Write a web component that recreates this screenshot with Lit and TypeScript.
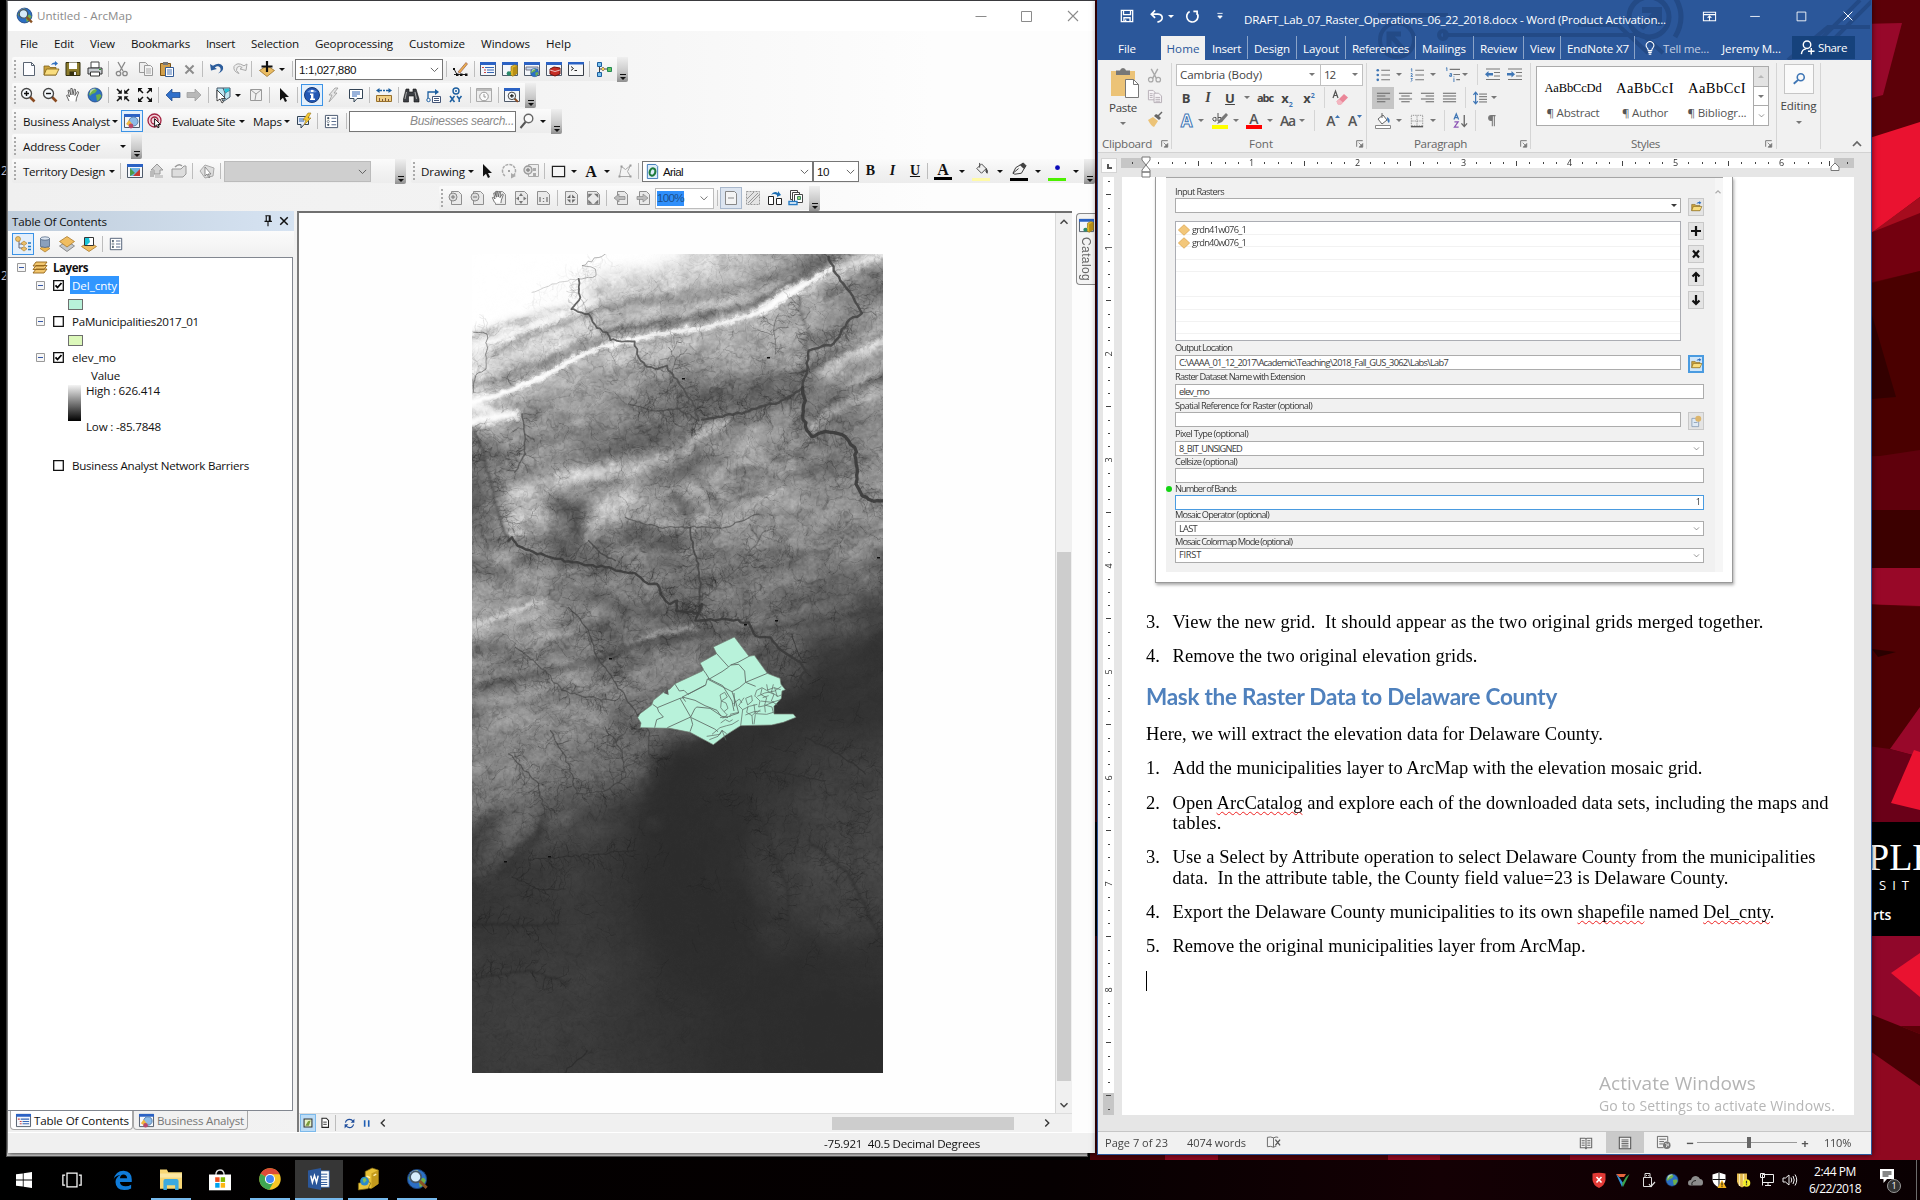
import { LitElement, html, css, svg, SVGTemplateResult } from "lit";
import { customElement, property } from "lit/decorators.js";
import { styleMap } from "lit/directives/style-map.js";

/* ------------------------------------------------------------------ icons */

const doc = svg`<path d="M2.500 1.500h8l3 3v10h-11z" fill="#fdfdff" stroke="#5a6472"/><path d="M10.500 1.500v3h3" fill="none" stroke="#5a6472"/>`;
const win = svg`<path d="M.5 1.500h15v13H.5z" fill="#f4f7fb" stroke="#4f5a69"/><path d="M0 1h16v3H0z" fill="#2b62c4"/>`;
const lens = svg`<path d="M10 10l4.500 4.500" stroke="#8a4a20" stroke-width="2.600"/><circle cx="6.500" cy="6.500" r="5" fill="#f4f8fc" stroke="#444" stroke-width="1.300"/>`;
const hand = svg`<path d="M4 14L1.500 8.500l1.200-.6L4.500 10 3 3.500l1.300-.4L6 8 5.800 1.500h1.400L8 7.800l1.200-5.600 1.300.3L10 8.500l2.500-4 1.200.7-2.200 6L11 14.500" fill="#fff" stroke="#555" stroke-width=".9"/>`;
const ptr = svg`<path d="M4 1v12.500l3-2.800 2 4.300 2-1-2-4h4z" fill="#111"/>`;
const globe = svg`<circle cx="8" cy="8" r="7" fill="#2c6fc4" stroke="#1a3f75" stroke-width=".7"/><path d="M4 3l4-1.500 2 2-2 2.500-3 1L3 9 1.800 7zM9 8l4-1 1.500 2-2.500 4-2 1z" fill="#6fb04a"/><path d="M3 3.500q3-3 6-1.500-4 1-6 5z" fill="#fff" opacity=".5"/>`;
const cyl = svg`<path d="M8 4l4-2 3 1v9l-5 3-5-3 3-3z" fill="#e3b92a" stroke="#7d6410" stroke-width=".7"/><path d="M10 5v10l5-3V3z" fill="#b98f16"/><circle cx="5.500" cy="12" r="2.500" fill="#2c8a6c"/>`;
const pageDim = svg`<path d="M4.500 1.500h7l3 3v10h-10z" fill="#e9e9e9" stroke="#8f8f8f"/>`;

const icons: Record<string, SVGTemplateResult> = {
  doc,
  open: svg`<path d="M1 5h5l1 1.500h6V14H1z" fill="#caa23c" stroke="#7d5f17" stroke-width=".8"/><path d="M3.500 8H16l-3 6H1z" fill="#f9dd7e" stroke="#7d5f17" stroke-width=".8"/><path d="M8 4q1-3 4-2.500V0l3 2.500L12 5V3.500Q10 3 8 4z" fill="#2f6fc0"/>`,
  save: svg`<path d="M1 1.500h14v13H1z" fill="#8b7b2c" stroke="#35300f"/><path d="M4 1.500h8V8H4z" fill="#fff"/><path d="M4.500 10.500h7v4h-7z" fill="#35300f"/><path d="M9 11h2v3H9z" fill="#eee"/>`,
  print: svg`<path d="M4 1h8v6H4z" fill="#fff" stroke="#444"/><path d="M1 7h14v6H1z" fill="#c9cdd2" stroke="#333"/><path d="M3.500 11h9v4h-9z" fill="#fff" stroke="#333"/><path d="M12 8.500h2" stroke="#2a2"/>`,
  cut: svg`<path d="M4 1l5 9M11 1L6 10" stroke="#888" stroke-width="1.300"/><circle cx="4.500" cy="12.500" r="2.200" fill="none" stroke="#888" stroke-width="1.300"/><circle cx="11" cy="12.500" r="2.200" fill="none" stroke="#888" stroke-width="1.300"/>`,
  copy: svg`<path d="M1.500 1.500h6l2 2v8h-8z" fill="#eee" stroke="#999"/><path d="M6.500 4.500h6l2 2v8h-8z" fill="#f4f4f4" stroke="#999"/><path d="M8 8h5M8 10h5M8 12h5" stroke="#aaa"/>`,
  paste: svg`<path d="M1.500 2.500h10v12h-10z" fill="#d3a04b" stroke="#7a5316"/><path d="M4 1h5v3H4z" fill="#777"/><path d="M6.500 6.500h8v9h-8z" fill="#fff" stroke="#335b96"/><path d="M8 9h5M8 11h5M8 13h5" stroke="#4a77b8"/>`,
  prj: svg`<path d="M2.500 4.500h9v11h-9z" fill="#dfeaf5" stroke="#7f94ad"/><circle cx="11" cy="5" r="4" fill="#dcb56c"/><path d="M5 10h5" stroke="#7f94ad"/>`,
  x: svg`<path d="M3 3l10 10M13 3L3 13" stroke="#8c8c8c" stroke-width="2.400"/>`,
  undo: svg`<path d="M1 3l1 6.500L8 8 5.800 6.500Q9 4 11 6.500q2 3-2 6 6-2 5-7Q11 .5 4 4.800z" fill="#2c5d9c"/>`,
  redo: svg`<path d="M15 3l-1 6.500L8 8l2.200-1.500Q7 4 5 6.500q-2 3 2 6-6-2-5-7Q5 .5 12 4.800z" fill="#eee" stroke="#aaa"/>`,
  add: svg`<path d="M8 4.500l7.500 5L8 15.500.5 9.500z" fill="#e9bb62" stroke="#90661c" stroke-width=".7"/><path d="M8 0v11M2.500 5.500h11" stroke="#111" stroke-width="2.200"/>`,
  edit: svg`<path d="M2 13.500h12M2 8l3 5.500" stroke="#222"/><path d="M1 7h2v2H1zM4 12.500h2.500V15H4zM13 12.500h2.500V15H13zM8 12.500h2.500V15H8z" fill="#111"/><path d="M6 11L14 1.500l1.500 1.500L8 12z" fill="#eab04c" stroke="#844" stroke-width=".6"/>`,
  toc: svg`${win}<path d="M5 6.500h9M7 9h7M7 11.500h7" stroke="#3566b5" stroke-width="1.200"/><path d="M2 6.500h2M4 9h2M4 11.500h2" stroke="#c44" stroke-width="1.200"/>`,
  cat: svg`${win}<g transform="translate(2 2) scale(.88)">${cyl}</g>`,
  search: svg`${win}<path d="M2 6h12v3H2z" fill="#c9daf0" stroke="#778"/><g transform="translate(6 7) scale(.58)">${globe}</g>`,
  tool: svg`${win}<path d="M4 8l4-2 6 1v6l-5 2-5-2z" fill="#c62d25" stroke="#6d120d"/><path d="M4 9l5 1.500L14 9" fill="none" stroke="#fff" stroke-width=".7"/>`,
  py: svg`<path d="M.5 1.500h15v13H.5z" fill="#f7f7f7" stroke="#3a3f48"/><path d="M0 1h16v2.500H0z" fill="#2b62c4"/><path d="M3 5.500l2.500 2L3 9.500M6.500 9.500H9" fill="none" stroke="#222"/>`,
  model: svg`<path d="M3.500 4v9M4 8h8" stroke="#444"/><path d="M1.500 1.500h4v4h-4zM1.500 11.500h4v4h-4z" fill="#7cc3ee" stroke="#1d5fa0"/><path d="M7 6l2 2-2 2-2-2z" fill="#f4d04a" stroke="#987"/><path d="M11.500 6.500h4v4h-4z" fill="#6ac45c" stroke="#285"/>`,
  zin: svg`${lens}<path d="M6.500 4v5M4 6.500h5" stroke="#111" stroke-width="1.400"/>`,
  zout: svg`${lens}<path d="M4 6.500h5" stroke="#111" stroke-width="1.400"/>`,
  hand,
  globe,
  fixin: svg`<path d="M2 2l3 3M14 2l-3 3M2 14l3-3M14 14l-3-3" stroke="#111" stroke-width="1.600"/><path d="M6.800 2.500v4.300H2.500zM9.200 2.500v4.300h4.300zM6.800 13.500V9.200H2.500zM9.200 13.500V9.200h4.300z" fill="#111"/>`,
  fixout: svg`<path d="M3 3l3 3M13 3l-3 3M3 13l3-3M13 13l-3-3" stroke="#111" stroke-width="1.500"/><path d="M1 1h4.500L1 5.500zM15 1h-4.500L15 5.500zM1 15h4.500L1 10.500zM15 15h-4.500L15 10.500z" fill="#111"/>`,
  back: svg`<path d="M1 8l6-6v3.500h8v5H7V14z" fill="#2f6fca" stroke="#1b4688" stroke-width=".7"/>`,
  fwd: svg`<path d="M15 8L9 2v3.500H1v5h8V14z" fill="#b8b8b8" stroke="#999" stroke-width=".7"/>`,
  sel: svg`<path d="M2 1h13v9L9 14l-7-3z" fill="#bfe6f2" stroke="#456"/><path d="M8 1l2 5 5-3M10 6l-1 7" stroke="#456" fill="none"/><path d="M9 2l5-.5.5 2-4 2.500z" fill="#24c3d8"/><path d="M2 3v11l3-2 2 4 1.500-1-2-3.500h4z" fill="#fff" stroke="#222" stroke-width=".8"/>`,
  clr: svg`<path d="M2.500 2.500h11v11h-11z" fill="#f0f0f0" stroke="#999"/><path d="M3 3l5 4 5-4M8 7l-1 6" stroke="#999" fill="none"/>`,
  ptr,
  info: svg`<circle cx="8" cy="8" r="7.500" fill="#2458b4" stroke="#173a78"/><path d="M3 5q5-5 10 0-5 1-10 0z" fill="#8fb4ec" opacity=".7"/><path d="M7 3h2.500v2H7zM6 6.500h3.400v5H11V13H6v-1.500h1V8H6z" fill="#fff"/>`,
  bolt: svg`<path d="M10 1L4 8h3l-3 7 8-9H9l4-5z" fill="#e6e6e6" stroke="#999" stroke-width=".8"/>`,
  popup: svg`<path d="M1.500 2.500h13v9H9L6 15v-3.500H1.500z" fill="#fff" stroke="#345"/><path d="M4 5h8M4 7h8M4 9h5" stroke="#3566b5"/>`,
  meas: svg`<path d="M0 3.500L3.500 1v5zM16 3.500L12.500 1v5z" fill="#1d5fa0"/><path d="M3 3.500h3M7 3.500h2M10 3.500h3" stroke="#1d5fa0" stroke-width="1.500"/><path d="M.5 8.500h15v6H.5z" fill="#f1cf85" stroke="#98702a"/><path d="M3.500 14v-3M6.500 14v-2M9.500 14v-3M12.500 14v-2" stroke="#754"/>`,
  bino: svg`<path d="M3 2h3v3h4V2h3l3 10v3h-5V9H5.500v6h-5v-3z" fill="#3c3f44" stroke="#111" stroke-width=".6"/><path d="M3.500 5L2 12M12 5l1.500 7" stroke="#aaa"/>`,
  route: svg`<path d="M2 13V5h8" fill="none" stroke="#1d5fa0" stroke-width="1.300"/><path d="M9 2l4 3-4 3z" fill="#1d5fa0"/><circle cx="2.500" cy="13" r="1.700" fill="#fff" stroke="#1d5fa0"/><path d="M6.500 9.500h8v6h-8z" fill="#fff" stroke="#457"/><path d="M8 11.500h5M8 13.500h5" stroke="#457"/>`,
  xy: svg`<circle cx="8" cy="4" r="3" fill="none" stroke="#1d5fa0" stroke-width="1.400"/><circle cx="8" cy="4" r="1" fill="#1d5fa0"/><path d="M2 9l4.500 6M6.500 9L2 15M9 9l2.200 3L13.500 9M11.200 12v3" stroke="#1d5fa0" stroke-width="1.500" fill="none"/>`,
  clock: svg`<path d="M.5 1.500h15v13H.5z" fill="#eee" stroke="#aaa"/><path d="M1 2h14v2H1z" fill="#bbb"/><circle cx="8" cy="9.500" r="4.300" fill="#fafafa" stroke="#999"/><path d="M8 7v3h2" fill="none" stroke="#999"/>`,
  view: svg`${win}<g transform="translate(3 4) scale(.75)">${lens}<path d="M6.500 4v5M4 6.500h5" stroke="#111" stroke-width="1.400"/></g>`,
  ba: svg`${win}<circle cx="9.500" cy="8.500" r="4.500" fill="#8dbce8" stroke="#5a80ac"/><path d="M5 7l-3 4 3 2 4-1z" fill="#f0b840"/><circle cx="7" cy="13" r="2.400" fill="#b84a6c"/>`,
  ring: svg`<circle cx="7.500" cy="7.500" r="6.500" fill="#f3d5dc" stroke="#a32442" stroke-width="1.300"/><circle cx="7.500" cy="7.500" r="3.500" fill="none" stroke="#a32442" stroke-width="1.300"/><g transform="translate(5 5) scale(.65)"><path d="M4 1v12.500l3-2.800 2 4.300 2-1-2-4h4z" fill="#fff" stroke="#111" stroke-width="1.500"/></g>`,
  bolt2: svg`<path d="M1.500 3.500h11v8H8L5 15v-3.500H1.500z" fill="#e4ecf8" stroke="#345"/><path d="M3 6h5M3 8h5" stroke="#3566b5"/><path d="M12 0L7 7h3l-2 5 7-7h-3l3-5z" fill="#f4c832" stroke="#97761c" stroke-width=".6"/>`,
  opts: svg`<path d="M1.500 1.500h13v13h-13z" fill="#fff" stroke="#44546c"/><circle cx="4.500" cy="4.500" r="1.200" fill="#456"/><circle cx="4.500" cy="8" r="1.200" fill="#fff" stroke="#456" stroke-width=".6"/><circle cx="4.500" cy="11.500" r="1.200" fill="#456"/><path d="M8 4.500h5M8 8h5M8 11.500h5" stroke="#5c6f90" stroke-width="1.200"/>`,
  mag: svg`<circle cx="9.500" cy="5.500" r="4.300" fill="#fafafa" stroke="#666" stroke-width="1.400"/><path d="M6.500 9L1.500 15" stroke="#555" stroke-width="2"/>`,
  terr: svg`${win}<path d="M3 5h10v8H3z" fill="#6eb3e4"/><path d="M3 5l5 5-5 3z" fill="#4c9b46"/><path d="M13 6L6 13h7z" fill="#c43a32"/>`,
  tarr: svg`<path d="M8 1l6 6h-3v4H5V7H2z" fill="#d5d5d5" stroke="#999"/><path d="M1 8l4-1v7H1z" fill="#bbb"/><path d="M6 12h8v3H6z" fill="#ccc"/>`,
  tbox: svg`<path d="M1 6h9l3-3h2v8l-3 3H1z" fill="#ddd" stroke="#999"/><path d="M4 4q4-4 7-1" stroke="#999" fill="none" stroke-width="1.500"/>`,
  tsel: svg`<path d="M1 8l5-6 9 3-1 8-8 2z" fill="#ddd" stroke="#aaa"/><path d="M6 4v9l2-2 2 4 1-1-2-3h3z" fill="#fff" stroke="#777" stroke-width=".8"/>`,
  rot: svg`<path d="M4 13A6.500 6.500 0 1 1 12 13" fill="none" stroke="#aaa" stroke-width="1.500" stroke-dasharray="3 1"/><path d="M10 10l5 3-5 2.500z" fill="#aaa"/><circle cx="8" cy="8" r="1" fill="#888"/>`,
  zsel: svg`<path d="M5.500 1.500h10v12h-10z" fill="#eee" stroke="#aaa"/><circle cx="5" cy="7" r="4" fill="#ddd" stroke="#999" stroke-width="1.300"/><path d="M5 5v4M3 7h4" stroke="#888" stroke-width="1.300"/><path d="M10 5h3v3h-3zM10 10h3v3h-3z" fill="#aaa"/>`,
  rect: svg`<path d="M1.500 2.500h13v11h-13z" fill="#f5f5f5" stroke="#222" stroke-width="1.300"/>`,
  poly: svg`<path d="M2.500 13.500l2-10 4 3 5-4-3 6 3 5z" fill="#f4f4f4" stroke="#aaa"/><path d="M1.500 12.500h2v2h-2zM3.500 2.500h2v2h-2zM12.500 1.500h2v2h-2zM12.500 12.500h2v2h-2z" fill="#999"/>`,
  font: svg`<path d="M2.500.5h9l2 2v13h-11z" fill="#dcecf8" stroke="#3b78b8"/><ellipse cx="8" cy="8.500" rx="3" ry="4" fill="none" stroke="#1d7a3c" stroke-width="2.200" transform="rotate(18 8 8.500)"/>`,
  bucket: svg`<path d="M3 7l5-5 5 5-5 5z" fill="#eee" stroke="#444"/><path d="M6 1v5M13 7q2 2 1 5-2-1-1-5z" fill="#555" stroke="#444"/>`,
  pen: svg`<path d="M1 12l3-6 5-3 4 4-3 5-7 1z" fill="#f2f2f2" stroke="#333"/><path d="M1 12l6-5M9 3l3-2 3 3-2 3z" fill="#444" stroke="#333"/>`,
  dot: svg`<circle cx="8" cy="6" r="2.600" fill="#0a0ab8"/>`,
  pzin: svg`${pageDim}<circle cx="6" cy="7" r="4" fill="#ddd" stroke="#888"/><path d="M6 5v4M4 7h4" stroke="#777"/>`,
  pzout: svg`${pageDim}<circle cx="6" cy="7" r="4" fill="#ddd" stroke="#888"/><path d="M4 7h4" stroke="#777"/>`,
  phand: svg`${pageDim}<g transform="scale(.9)">${hand}</g>`,
  pall: svg`<path d="M2.500 1.500h9l3 3v10h-12z" fill="#e9e9e9" stroke="#8f8f8f"/><path d="M8 3l2 3H6zM8 14l2-3H6zM3 8.500l3-2v4zM13.500 8.500l-3-2v4z" fill="#777"/>`,
  pone: svg`<path d="M2.500 1.500h9l3 3v10h-12z" fill="#e9e9e9" stroke="#8f8f8f"/><path d="M5 7v5M12 7v5M8.500 8v1M8.500 11v1" stroke="#777" stroke-width="1.300"/>`,
  pin: svg`<path d="M2.500 1.500h9l3 3v10h-12z" fill="#e9e9e9" stroke="#8f8f8f"/><g transform="translate(2.500 3) scale(.72)"><path d="M6.800 2v4.800H2zM9.200 2v4.800H14zM6.800 14V9.200H2zM9.200 14V9.200H14z" fill="#666"/></g>`,
  pout: svg`<path d="M2.500 1.500h9l3 3v10h-12z" fill="#e9e9e9" stroke="#8f8f8f"/><g transform="translate(2.500 3) scale(.72)"><path d="M1 1h6L1 7zM15 1H9l6 6zM1 15h6L1 9zM15 15H9l6-6z" fill="#777"/></g>`,
  pback: svg`${pageDim}<path d="M1 8l5-4v2.500h6v3H6V12z" fill="#bbb" stroke="#888" stroke-width=".7"/>`,
  pfwd: svg`${pageDim}<path d="M13 8L8 4v2.500H2v3h6V12z" fill="#bbb" stroke="#888" stroke-width=".7"/>`,
  draft: svg`<path d="M2.500 1.500h9l2 2v11h-11z" fill="#f4f4f4" stroke="#888"/><path d="M5 8h6" stroke="#888"/>`,
  focus: svg`<path d="M1.500 1.500h13v13h-13z" fill="#e4e4e4" stroke="#999" stroke-dasharray="2 1"/><path d="M3 13L13 3M5 14l9-9M2 9l7-7" stroke="#999"/>`,
  chg: svg`<path d="M1.500 6.500h5v8h-5zM9.500 8.500h5v6h-5z" fill="#fff" stroke="#222"/><path d="M4 5q3-5 7-2V1l3 4-4 2V5Q7 3 4 5z" fill="#1d6fb4"/>`,
  ddp: svg`<path d="M2.500.5h7v9h-7z" fill="#fff" stroke="#444"/><path d="M4.500 2.500h7v9h-7z" fill="#fff" stroke="#444"/><path d="M6.500 4.500h8v8h-8z" fill="#fff" stroke="#444"/><path d="M9.500 6.500h3v3h-3z" fill="#9d7" stroke="#486"/><path d="M1 11.500h8v3H1z" fill="#fff" stroke="#267bc4" stroke-width="1.400"/>`,
  tree: svg`<path d="M4 4v8h5M4 8h5" fill="none" stroke="#667"/><circle cx="3" cy="3" r="2.500" fill="#ecc06a" stroke="#a87722" stroke-width=".6"/><path d="M9 5l3 2.300-3 2.300-3-2.300zM9 10.500l3 2.300-3 2.300-3-2.300z" fill="#ecc06a" stroke="#a87722" stroke-width=".6"/><path d="M13 7h3M13 10.500h3M13 13.500h3" stroke="#267bc4" stroke-width="1.300"/>`,
  src: svg`<path d="M8 9l5 3.500L8 16l-5-3.500z" fill="#ecb650" stroke="#9c6c1c" stroke-width=".6"/><path d="M3.500 2.500v8q4.500 2 9 0v-8z" fill="#8aa0bc" stroke="#435a78" stroke-width=".7"/><ellipse cx="8" cy="2.500" rx="4.500" ry="1.700" fill="#dbe5f1" stroke="#435a78" stroke-width=".7"/>`,
  vis: svg`<path d="M8 5l7.500 5L8 15.500.5 10z" fill="#c4c8cc" stroke="#666" stroke-width=".7"/><path d="M8 .5l7.500 5L8 11 .5 5.500z" fill="#f0bd60" stroke="#a06e1c" stroke-width=".7"/>`,
  dia: svg`<path d="M8 1l7.500 7L8 15 .5 8z" fill="#f3c77a" stroke="#dba349"/>`,
  sell: svg`<path d="M8 6l7.500 4.500L8 15.500.5 10.500z" fill="#f0bd60" stroke="#a06e1c" stroke-width=".7"/><path d="M3.500 1.500h9v8h-9z" fill="#fff" stroke="#333"/><path d="M4 2h4l1 4-3 3H4z" fill="#18c4d8"/>`,
  layers: svg`<path d="M4 10h11l-3 4H1zM4 6.500h11l-3 4H1zM4 3h11l-3 4H1z" fill="#f2c66e" stroke="#936418" stroke-width=".9"/>`,
  arc: svg`${globe}<circle cx="7" cy="6.500" r="4" fill="#d7ecfa" stroke="#456" stroke-width="1.200"/><path d="M10 9.500l5 5" stroke="#8a5326" stroke-width="2.200"/>`,
  pinp: svg`<path d="M5 2h6M6 2v6M10.500 2v6M9.500 2v6M4 8.500h8.500M8 9v5" stroke="#111" stroke-width="1.300" fill="none"/>`,
  cls: svg`<path d="M3 3l10 10M13 3L3 13" stroke="#111" stroke-width="2"/>`,
  mapv: svg`<path d="M3.500 3.500h9v9h-9z" fill="#e7f3c8" stroke="#333" stroke-width="1.200"/><path d="M5 11l3-5 3-1-2 6z" fill="#7a9a3c"/>`,
  layv: svg`<path d="M4.500 2.500h5l2.500 2.500v8H4.500z" fill="#fff" stroke="#222" stroke-width="1.200"/><path d="M6 7h4M6 9.500h4" stroke="#222"/>`,
  refresh: svg`<path d="M3 7q1-4 5-4 3 0 4.500 2.500M13 9q-1 4-5 4-3 0-4.500-2.500" fill="none" stroke="#1f4e9c" stroke-width="1.400"/><path d="M14 2v5H9.500zM2 14V9h4.500z" fill="#1f4e9c"/>`,
  pause: svg`<path d="M4.500 4v8M9.500 4v8" stroke="#1f5fb4" stroke-width="2"/>`,
  lt: svg`<path d="M10 4L6 8l4 4" fill="none" stroke="#333" stroke-width="1.600"/>`,
  rt: svg`<path d="M6 4l4 4-4 4" fill="none" stroke="#333" stroke-width="1.600"/>`,
  up: svg`<path d="M4 10l4-4 4 4" fill="none" stroke="currentColor" stroke-width="1.700"/>`,
  dn: svg`<path d="M4 6l4 4 4-4" fill="none" stroke="currentColor" stroke-width="1.700"/>`,
  chev: svg`<path d="M3.500 6L8 10.500 12.500 6" fill="none" stroke="#555" stroke-width="1.100"/>`,
  wmin: svg`<path d="M2.500 8.500h11" stroke="currentColor"/>`,
  wmax: svg`<path d="M3.500 3.500h10v10h-10z" fill="none" stroke="currentColor"/>`,
  wcls: svg`<path d="M3 3l10 10M13 3L3 13" stroke="currentColor" stroke-width="1.100"/>`,
  /* word */
  wsave: svg`<path d="M1.500 1.500h13v13h-13zM4 1.500v5h8v-5M4.500 14.500V10h7v4.500M6.500 12v2.500" fill="none" stroke="#fff" stroke-width="1.500"/>`,
  wundo: svg`<path d="M2.500 5.500h7q5 .5 4.500 4.500-.5 3-5 4M6.500 1.500l-4 4 4 4" fill="none" stroke="#fff" stroke-width="1.800"/>`,
  wredo: svg`<path d="M10 2.500h4v4M13.500 4A6 6 0 1 1 6 2.600" fill="none" stroke="#fff" stroke-width="1.800"/>`,
  wcust: svg`<path d="M5 5h6M5.500 8h5L8 10.800z" fill="#fff" stroke="#fff" stroke-width="1"/>`,
  wdisp: svg`<path d="M1.500 3.500h13v9h-13zM1.500 6h13M8 12V7.500M6 9.500l2-2 2 2" fill="none" stroke="#fff" stroke-width="1.100"/>`,
  bulb: svg`<path d="M6 11q0-2-1.500-3.500a4.300 4.300 0 1 1 7 0Q10 9 10 11zM6 13h4M6.500 15h3" fill="none" stroke="#fff" stroke-width="1.200"/>`,
  share: svg`<circle cx="7.500" cy="5" r="4" fill="none" stroke="#fff" stroke-width="1.500"/><path d="M1.500 15q.5-5 5-5.500M12 8.500v7M8.500 12h7" fill="none" stroke="#fff" stroke-width="1.500"/>`,
  wcut: svg`<path d="M4.500 1l5.500 10M11.500 1L6 11" stroke="#a9a9a9" stroke-width="1.500"/><circle cx="4" cy="12.500" r="2.400" fill="none" stroke="#a9a9a9" stroke-width="1.300"/><circle cx="12" cy="12.500" r="2.400" fill="none" stroke="#a9a9a9" stroke-width="1.300"/>`,
  wcopy: svg`<path d="M1.500 1.500h5l2 2v8h-7z" fill="#f6f3f6" stroke="#b5aeb5"/><path d="M7.500 4.500h5l3 3v7h-8z" fill="#f6f3f6" stroke="#b5aeb5"/><path d="M3 5h3M3 7h3M3 9h3M9 9h5M9 11h5M9 13h5" stroke="#b5aeb5"/>`,
  brush: svg`<path d="M1 9l5-3 5 4-4 6q-3-1-6-7z" fill="#ecc377"/><path d="M7 5l5 4 2-2-2-2 3.500-3.500-1-1L11 4 9 3z" fill="#666"/>`,
  erase: svg`<path d="M1 8L3.500 1 6 8M2 5.500h3" fill="none" stroke="#555" stroke-width="1.200"/><path d="M4.500 11.500L12 4l4 3.500-7 7H6z" fill="#ea8698"/><path d="M4.500 11.500L7 9l4 3.500-2 2H6z" fill="#f3b5c0"/>`,
  wmag: svg`<circle cx="10" cy="6" r="4" fill="none" stroke="#3f76b5" stroke-width="1.800"/><path d="M7 9l-5 4.500" stroke="#3f76b5" stroke-width="2.200"/>`,
  bul: svg`<path d="M6 2.500h10M6 8h10M6 13.500h10" stroke="#777" stroke-width="1.200"/><circle cx="2" cy="2.500" r="1.500" fill="#3f76b5"/><circle cx="2" cy="8" r="1.500" fill="#3f76b5"/><circle cx="2" cy="13.500" r="1.500" fill="#3f76b5"/>`,
  num: svg`<path d="M6 2.500h10M6 8h10M6 13.500h10" stroke="#777" stroke-width="1.200"/><path d="M1 1.500l1-.8v3.600M.8 6.500q2-.8 2 .5L1 9.500h2.400M.8 12h2l-1 1.200q2 .8-1 2.300" fill="none" stroke="#3f76b5"/>`,
  multi: svg`<path d="M5 2.500h11M9 8h7M12 13.500h4" stroke="#777" stroke-width="1.200"/><path d="M1 1.500l1-.8v3.600M5 7h2v3H5V8.500h2M9.500 12v4M9.500 10v1" fill="none" stroke="#3f76b5"/>`,
  outd: svg`<path d="M1 2h14M9 5.500h6M9 9h6M1 12.500h14" stroke="#777" stroke-width="1.200"/><path d="M0 7.300L3.500 4v2H8v2.500H3.500v2z" fill="#3f76b5"/>`,
  ind: svg`<path d="M1 2h14M9 5.500h6M9 9h6M1 12.500h14" stroke="#777" stroke-width="1.200"/><path d="M8 7.300L4.500 4v2H0v2.500h4.500v2z" fill="#3f76b5"/>`,
  al: svg`<path d="M1 3.500h14M1 6.500h9M1 9.500h14M1 12.500h9" stroke="#666" stroke-width="1.100"/>`,
  ac: svg`<path d="M1 3.500h14M3.500 6.500h9M1 9.500h14M3.500 12.500h9" stroke="#666" stroke-width="1.100"/>`,
  ar: svg`<path d="M1 3.500h14M6 6.500h9M1 9.500h14M6 12.500h9" stroke="#666" stroke-width="1.100"/>`,
  aj: svg`<path d="M1 3.500h14M1 6.500h14M1 9.500h14M1 12.500h14" stroke="#666" stroke-width="1.100"/>`,
  spc: svg`<path d="M7 3.500h9M7 6.500h9M7 9.500h9M7 12.500h9" stroke="#666" stroke-width="1.100"/><path d="M3 2v12M.5 4.500L3 1.500l2.500 3M.5 11.500l2.500 3 2.500-3" fill="none" stroke="#3f76b5" stroke-width="1.400"/>`,
  shade: svg`<path d="M3 6l5-4 4 5-5 4z" fill="#fff" stroke="#666"/><path d="M7 0v5" stroke="#666"/><path d="M12 4q4 2 2 6-2-1-2-6z" fill="#3f76b5"/><path d="M.5 12.500h15v3H.5z" fill="#fff" stroke="#888"/>`,
  bord: svg`<path d="M1.500 1.500h13v12h-13zM8 2v12M2 8h12" fill="none" stroke="#777" stroke-dasharray="1 1"/><path d="M1 14.500h14" stroke="#555" stroke-width="1.500"/>`,
  az: svg`<path d="M1 7l2.500-6L6 7M2 5h3" fill="none" stroke="#3f76b5" stroke-width="1.300"/><path d="M1.500 9.500h4l-4 5.500h4.500" fill="none" stroke="#8c55b5" stroke-width="1.300"/><path d="M12 2v12M9 11l3 3.500 3-3.500" fill="none" stroke="#666" stroke-width="1.400"/>`,
  para: svg`<path d="M13 2H7.500a3 3 0 0 0 0 6H9V2M9 2v13M11.500 2v13" fill="none" stroke="#777" stroke-width="1.300"/><path d="M9 2H7.500a3 3 0 0 0 0 6H9z" fill="#777"/>`,
  launch: svg`<path d="M4.500 12V4.500H12" fill="none" stroke="#777" stroke-width="1.200"/><path d="M7 7l4 4M12 8v4.500H7.500z" stroke="#777" fill="#777"/>`,
  proof: svg`<path d="M8 3Q5 1.500 1.500 2.500v10Q5 11.500 8 13zM8 3q3-1.500 5-.5M8 13q2-1 3-1" fill="none" stroke="#666"/><path d="M10 5l5 6M15 5l-5 6" stroke="#555" stroke-width="1.400"/>`,
  read: svg`<path d="M1.500 2.500h5.500l1 1 1-1h5.500v11H9l-1 1-1-1H1.500zM8 3.500v11" fill="none" stroke="#666" stroke-width="1.200"/><path d="M3 5.500h3.500M3 8h3.500M3 10.500h3.500M9.500 5.500H13M9.500 8H13M9.500 10.500H13" stroke="#666" stroke-width="1.200"/>`,
  lay: svg`<path d="M1.500 1.500h13v13h-13z" fill="#eee" stroke="#555" stroke-width="1.200"/><path d="M4 4.500h8M4 6.500h8M4 8.500h8M4 10.500h8M4 12.500h8" stroke="#555"/>`,
  web: svg`<path d="M12.500 7V1.500h-11v12H8" fill="none" stroke="#666"/><path d="M3.500 4.500h7M3.500 7h5M3.500 9.500h4" stroke="#666"/><circle cx="11.500" cy="11" r="4" fill="#777"/><path d="M10 9l2 1-1 3M13 9v3" stroke="#eee" fill="none"/>`,
  /* taskbar */
  start: svg`<path d="M0 2.300L6.800 1.400v6.200H0zM7.600 1.200L16 0v7.600H7.600zM0 8.400h6.800v6.200L0 13.700zM7.600 8.400H16V16l-8.400-1.200z" fill="#fff"/>`,
  tview: svg`<path d="M4 2.500h8v11H4zM2.500 4H.7v8h1.800M13.500 4h1.800v8h-1.800" fill="none" stroke="#fff"/>`,
  edge: svg`<path d="M.5 7.500Q2 .5 8.500.5 15 1 15 7.500v2H5.500q.5 3.500 4.500 3.500 2.500 0 4.500-1.300v3Q12.500 16 9 16 2 15.500 2 9.500 2 6 6 4 1.500 4.500.5 7.500zM5.500 6.500h5.800q-.3-3-2.900-3-2.500.2-2.900 3z" fill="#0f7bd9"/>`,
  fold: svg`<path d="M0 1h5l1 2h10v12H0z" fill="#f8d775"/><path d="M0 4h16v3H0z" fill="#fbe7a3"/><path d="M2.500 9.500q0-1.500 1.500-1.500h8q1.500 0 1.500 1.500V16H11v-3.500H5V16H2.500z" fill="#3ba9e0"/>`,
  store: svg`<path d="M5 4.500Q5 .7 8 .7t3 3.800" fill="none" stroke="#ddd"/><path d="M0 4h16v11.500H0z" fill="#fff"/><path d="M4.500 6h3.200v3.400H4.500z" fill="#f04e1f"/><path d="M8.500 6h3.200v3.400H8.500z" fill="#7eb900"/><path d="M4.500 10.200h3.200v3.400H4.500z" fill="#00a3ee"/><path d="M8.500 10.200h3.200v3.400H8.500z" fill="#fdb813"/>`,
  chrome: svg`<circle cx="8" cy="8" r="7.800" fill="#f6c626"/><path d="M8 8L1.200 4.200A7.800 7.800 0 0 1 15 4.500H8z" fill="#dd4b39"/><path d="M8 8l-6.800-3.800A7.800 7.800 0 0 0 7.500 15.800L11 9.500z" fill="#3fa652"/><circle cx="8" cy="8" r="3.700" fill="#fff"/><circle cx="8" cy="8" r="2.900" fill="#4285f4"/>`,
  word: svg`<path d="M8 2h7.500v12H8z" fill="#fff" stroke="#2b579a" stroke-width=".6"/><path d="M9 4.500h5M9 6.500h5M9 8.500h5M9 10.500h5M9 12h5" stroke="#2b579a" stroke-width=".7"/><path d="M0 1.800L9.500 0v16L0 14.200z" fill="#2b579a"/><path d="M2 5.500l1.200 5 1.500-5 1.500 5 1.200-5" fill="none" stroke="#fff" stroke-width="1.100"/>`,
  cyl: svg`<path d="M6 2.500l5-2.500 4.500 1.500v10L10 15l-4-1.500z" fill="#e8c136" stroke="#7d6410" stroke-width=".5"/><path d="M10.500 4v11l5-3.500v-10z" fill="#c39a1c"/><path d="M7 6l2.500 1M12 5.500l2-1" stroke="#fff2b0"/><path d="M1 11l7-1.500 2 1.500-2 4-7 1z" fill="#e8c53c" stroke="#7d6410" stroke-width=".5"/><circle cx="5.500" cy="9.500" r="3.200" fill="#2c8acc"/><path d="M4 8l2-1 1 2-2 2z" fill="#7cc05a"/>`,
  shx: svg`<path d="M1.500 1.500Q8 0 14.500 1.500V8q-.5 5-6.500 8-6-3-6.500-8z" fill="#e23a36"/><path d="M5.500 5l5 5.500M10.500 5l-5 5.500" stroke="#fff" stroke-width="1.600"/>`,
  tri: svg`<path d="M1 2h10L9 5H4z" fill="#e7643c"/><path d="M1 2l6 13 1.500-3.500L4 5z" fill="#2f8fd8"/><path d="M14.500 2L8 15l-1-3.500L11 5z" fill="#39a34c"/>`,
  usb: svg`<path d="M5 5.500V1.500h5v4M3.500 5.500h8v9h-8zM6.500 3v1M8.700 3v1" fill="none" stroke="#ddd"/><path d="M9 12l2 2.500L15 10" fill="none" stroke="#ddd" stroke-width="1.200"/>`,
  cloud: svg`<path d="M1 11q0-3 3-3 1-4 5-4 3 .3 4 3 3 0 3 3.500 0 3-2 3H3Q1 13.500 1 11z" fill="#8c8c8c"/><path d="M5 13q-1-4 4-4.500" stroke="#222" fill="none"/>`,
  def: svg`<path d="M1.500 2.500L8 .5l6.500 2V8q-.5 5-6.500 7.500Q2 13 1.500 8z" fill="#fff"/><path d="M8 .5v15M1.500 7.500h13" stroke="#111"/><path d="M11 8l4.500 8h-9z" fill="#f5b31c"/><path d="M11 10.500v3M11 14.200v.9" stroke="#111"/>`,
  yel: svg`<path d="M2 1.500h10v8q-1 4-5 6-4-2-5-6z" fill="#e4b94c"/><path d="M4.500 2v12M8.500 2v12" stroke="#fbeab0" stroke-width="1.300"/><circle cx="11.500" cy="11" r="3.800" fill="#f4ee2a"/><path d="M11.500 8.800v2.700M11.500 12.300v1" stroke="#333" stroke-width="1.200"/>`,
  net: svg`<path d="M3.500 2.500h11v8h-11zM9 10.500v3M6 13.500h6M1.500 1.500h4v4h-4zM3.500 5.500v8" fill="#0a0203" stroke="#eee"/>`,
  vol: svg`<path d="M1 6h2.500L7 3v10l-3.500-3H1z" fill="none" stroke="#eee"/><path d="M9 5.500q1.500 2.500 0 5M11 4q2.500 4 0 8M13 2.500q3.500 5.500 0 11" fill="none" stroke="#eee"/>`,
  note: svg`<path d="M1 1h14v10H8l-3.500 4v-4H1z" fill="#fff"/><path d="M3.500 4h9M3.500 6h9M3.500 8h6" stroke="#111"/>`,
};

const icon = (name: string, s = 16) =>
  html`<svg class="ic" width=${s} height=${s} viewBox="0 0 16 16">${icons[name]}</svg>`;

/* -------------------------------------------------- positioned-flow strips */

/** An item of a bar: left edge, width, and what it shows. */
type Cell = [number, number, unknown];

const ic = (cx: number, name: string, s = 16): Cell => [cx - s / 2, s, icon(name, s)];
const sep = (cx: number): Cell => [cx, 1, html`<i class="sep"></i>`];
const car = (cx: number): Cell => [cx - 3, 6, html`<i class="car"></i>`];
const tx = (x: number, w: number, t: unknown, cls = ""): Cell => [x, w, html`<fit-text class=${cls} w=${w}>${t}</fit-text>`];
const box = (x: number, w: number, cls: string, t: unknown): Cell => [x, w, html`<div class="bx ${cls}">${t}</div>`];

const strip = (start: number, cells: Cell[]) => {
  let at = start;
  return cells.map(([x, w, t]) => {
    const m = x - at;
    at = x + w;
    return html`<div class="cell" style=${styleMap({ marginLeft: `${m}px`, width: `${w}px` })}>${t}</div>`;
  });
};

/** Text tracked to a given width. */
@customElement("fit-text")
export class FitText extends LitElement {
  @property({ type: Number }) w = 0;
  static styles = css`
    :host { display: inline-block; white-space: pre; }
    .in { display: inline-block; white-space: pre; }
  `;
  render() {
    return html`<span class="in"><slot></slot></span>`;
  }
  firstUpdated() {
    const span = this.renderRoot.querySelector(".in") as HTMLElement;
    const n = (this.textContent ?? "").length;
    if (!n || !this.w) return;
    const d = (this.w - span.getBoundingClientRect().width) / n;
    this.style.letterSpacing = `${d.toFixed(3)}px`;
  }
}

const shared = css`
  * { box-sizing: border-box; }
  .ic { display: block; flex: none; overflow: visible; }
  .cell { flex: none; display: flex; align-items: center; justify-content: center; height: 100%; }
  .sep { display: block; width: 1px; height: 16px; background: #bdbdbd; }
  .car { display: block; border: 3px solid transparent; border-top: 3.500px solid currentColor; border-bottom: 0; }
  .bx { width: 100%; display: flex; align-items: center; justify-content: center; }
`;

/* ----------------------------------------------------------------- raster */

const W = 411;
const H = 819;

const relief = [
  [255, 255, 255, 255, 250, 200, 155, 125, 205],
  [255, 255, 250, 190, 165, 180, 165, 150, 120],
  [220, 175, 170, 175, 165, 172, 160, 135, 155],
  [200, 142, 150, 135, 120, 112, 112, 125, 145],
  [110, 145, 130, 112, 108, 128, 132, 122, 145],
  [98, 160, 138, 165, 128, 150, 148, 135, 145],
  [108, 116, 102, 118, 116, 122, 126, 118, 105],
  [165, 160, 124, 118, 96, 112, 108, 96, 70],
  [140, 124, 130, 122, 120, 102, 84, 62, 52],
  [126, 138, 126, 110, 92, 56, 52, 50, 50],
  [136, 128, 112, 100, 50, 50, 54, 62, 64],
  [116, 106, 72, 60, 46, 47, 58, 66, 68],
  [62, 58, 60, 54, 45, 46, 62, 70, 70],
  [52, 56, 58, 54, 45, 45, 58, 64, 62],
  [60, 61, 60, 54, 48, 46, 45, 47, 50],
  [60, 62, 59, 54, 50, 46, 45, 44, 44],
  [57, 60, 58, 54, 50, 46, 45, 44, 44],
];

const hash = (x: number, y: number) => {
  let h = (x * 374761393 + y * 668265263) | 0;
  h = Math.imul(h ^ (h >>> 13), 1274126177);
  return ((h ^ (h >>> 16)) >>> 0) / 4294967295;
};
const vnoise = (x: number, y: number) => {
  const xi = Math.floor(x), yi = Math.floor(y);
  let fx = x - xi, fy = y - yi;
  fx = fx * fx * (3 - 2 * fx);
  fy = fy * fy * (3 - 2 * fy);
  const a = hash(xi, yi), b = hash(xi + 1, yi), c = hash(xi, yi + 1), d = hash(xi + 1, yi + 1);
  return a + (b - a) * fx + (c - a) * fy + (a - b - c + d) * fx * fy;
};
const fbm = (x: number, y: number, n: number) => {
  let s = 0, a = 0.5;
  for (let i = 0; i < n; i++) {
    s += a * vnoise(x, y);
    x = x * 2 + 17.3; y = y * 2 + 9.1; a /= 2;
  }
  return s;
};

type Line = { p: number[]; w: number; c: string; b: number; t?: number };
const U = 3; // polyline coordinates are thirds of a pixel
const bands: Line[] = [
  { p: [-20, 480, 130, 425, 310, 345, 480, 290, 700, 250, 880, 200, 1085, 70], w: 40, c: "rgba(235,235,235,.4)", b: 6 },
  { p: [-20, 450, 60, 428, 140, 398, 230, 358, 310, 313, 380, 280, 480, 258], w: 15, c: "#fff", b: 1.400 },
  { p: [490, 256, 560, 240, 700, 220, 800, 196, 880, 168, 1000, 90, 1082, 46], w: 13, c: "#fff", b: 1.400 },
  { p: [870, 165, 930, 125, 990, 90], w: 30, c: "rgba(255,255,255,.9)", b: 2.500 },
  { p: [-20, 512, 60, 490, 130, 482], w: 26, c: "#fff", b: 2.500 },
  { p: [-20, 450, 50, 465, 70, 485], w: 18, c: "#fff", b: 3 },
  { p: [-20, 255, 120, 205, 290, 168], w: 16, c: "rgba(110,110,110,.6)", b: 3 },
  { p: [60, 300, 200, 230, 300, 195, 360, 185], w: 16, c: "rgba(90,90,90,.65)", b: 3 },
  { p: [-20, 400, 150, 350, 300, 285, 410, 250], w: 14, c: "rgba(85,85,85,.65)", b: 3 },
  { p: [0, 225, 150, 178, 290, 180], w: 14, c: "rgba(255,255,255,.9)", b: 2.500 },
  { p: [60, 262, 180, 222, 270, 185], w: 9, c: "rgba(255,255,255,.85)", b: 2 },
  { p: [0, 290, 60, 262, 120, 240], w: 14, c: "rgba(255,255,255,.6)", b: 3 },
  { p: [0, 350, 90, 325, 200, 290, 330, 240], w: 10, c: "rgba(225,225,225,.5)", b: 3 },
  { p: [340, 178, 520, 140, 700, 112, 860, 95], w: 14, c: "rgba(85,85,85,.6)", b: 3 },
  { p: [880, 80, 960, 50, 1060, 20], w: 14, c: "rgba(75,75,75,.7)", b: 3 },
  { p: [380, 210, 560, 150, 760, 125, 840, 120], w: 7, c: "rgba(90,90,90,.6)", b: 2 },
  { p: [420, 190, 560, 165, 760, 160, 830, 120], w: 26, c: "rgba(215,215,215,.4)", b: 5 },
  { p: [400, 235, 620, 200, 850, 150, 930, 95, 1030, 45], w: 14, c: "rgba(72,72,72,.75)", b: 2.500 },
  { p: [480, 110, 620, 60, 780, 30, 940, 10], w: 50, c: "rgba(225,225,225,.45)", b: 9 },
  { p: [1100, 48, 1160, 20, 1260, -10], w: 26, c: "rgba(255,255,255,.9)", b: 4 },
  { p: [1070, 350, 1120, 310, 1190, 270, 1250, 240], w: 36, c: "rgba(250,250,250,.7)", b: 6 },
  { p: [1130, 410, 1180, 370, 1250, 330], w: 10, c: "rgba(235,235,235,.75)", b: 3 },
  { p: [1010, 520, 1110, 450, 1250, 410], w: 16, c: "rgba(230,230,230,.7)", b: 4 },
  { p: [1200, 180, 1250, 170], w: 30, c: "rgba(230,230,230,.5)", b: 6 },
  { p: [990, 360, 1090, 300, 1250, 230], w: 9, c: "rgba(60,60,60,.6)", b: 2.500 },
  { p: [1010, 500, 1110, 420, 1250, 360], w: 9, c: "rgba(60,60,60,.65)", b: 2.500 },
  { p: [560, 300, 760, 270, 900, 250, 960, 300], w: 50, c: "rgba(195,195,195,.4)", b: 12 },
  { p: [500, 430, 620, 470, 760, 420, 900, 400], w: 50, c: "rgba(90,90,90,.4)", b: 12 },
  { p: [300, 560, 500, 560, 600, 520], w: 50, c: "rgba(85,85,85,.4)", b: 12 },
  { p: [640, 604, 655, 570, 690, 535, 760, 505], w: 18, c: "rgba(248,248,248,.7)", b: 3.500 },
  { p: [830, 540, 900, 505, 960, 490], w: 22, c: "rgba(228,228,228,.6)", b: 6 },
  { p: [600, 600, 700, 570, 820, 580, 960, 540], w: 24, c: "rgba(215,215,215,.4)", b: 7 },
  { p: [110, 715, 240, 690, 380, 655, 440, 650, 600, 615], w: 34, c: "rgba(255,255,255,.62)", b: 6 },
  { p: [230, 680, 330, 660, 430, 640], w: 20, c: "rgba(255,255,255,.5)", b: 5 },
  { p: [120, 720, 230, 740, 300, 720], w: 24, c: "rgba(255,255,255,.45)", b: 6 },
  { p: [130, 825, 135, 770, 200, 755, 215, 800], w: 24, c: "rgba(255,255,255,.62)", b: 5 },
  { p: [110, 838, 150, 835], w: 9, c: "rgba(255,255,255,.7)", b: 2 },
  { p: [345, 840, 370, 780, 420, 745, 480, 720], w: 34, c: "rgba(250,250,250,.6)", b: 6 },
  { p: [360, 790, 470, 790, 600, 810, 660, 830], w: 10, c: "rgba(240,240,240,.7)", b: 3 },
  { p: [650, 690, 700, 730, 712, 780, 660, 822], w: 12, c: "rgba(230,230,230,.65)", b: 3 },
  { p: [710, 690, 760, 640, 850, 620, 930, 640, 920, 700, 840, 740, 760, 730, 720, 700], w: 14, c: "rgba(210,210,210,.5)", b: 3 },
  { p: [760, 690, 800, 660, 880, 660, 880, 700, 800, 715], w: 7, c: "rgba(210,210,210,.5)", b: 2 },
  { p: [740, 712, 800, 735, 890, 715], w: 5, c: "rgba(80,80,80,.4)", b: 1.500 },
  { p: [950, 620, 965, 635], w: 18, c: "rgba(255,255,255,.7)", b: 4 },
  { p: [815, 585, 835, 590], w: 28, c: "rgba(255,255,255,.6)", b: 7 },
  { p: [250, 760, 320, 765, 310, 850, 250, 860], w: 60, c: "rgba(70,70,70,.7)", b: 7 },
  { p: [470, 825, 560, 870, 620, 880], w: 60, c: "rgba(75,75,75,.7)", b: 7 },
  { p: [600, 720, 640, 760, 640, 790], w: 34, c: "rgba(80,80,80,.6)", b: 4 },
  { p: [560, 720, 620, 700, 670, 740, 680, 790], w: 7, c: "rgba(205,205,205,.5)", b: 2 },
  { p: [590, 745, 620, 790, 650, 800], w: 4, c: "rgba(190,190,190,.5)", b: 1.500 },
  { p: [440, 890, 640, 905, 900, 780, 1080, 680], w: 8, c: "rgba(205,205,205,.5)", b: 3 },
  { p: [860, 780, 1100, 650], w: 8, c: "rgba(70,70,70,.5)", b: 3 },
  { p: [900, 880, 1080, 780, 1239, 700], w: 10, c: "rgba(190,190,190,.35)", b: 5 },
  { p: [900, 840, 1100, 720, 1239, 660], w: 6, c: "rgba(80,80,80,.35)", b: 3 },
  { p: [1010, 880, 1130, 820, 1250, 730], w: 7, c: "rgba(60,60,60,.35)", b: 3 },
  { p: [0, 860, 60, 900, 180, 980, 240, 950, 340, 970], w: 26, c: "rgba(235,235,235,.45)", b: 7 },
  { p: [0, 990, 100, 1000, 130, 1020], w: 34, c: "rgba(235,235,235,.45)", b: 8 },
  { p: [300, 1000, 450, 1060, 600, 1080, 680, 1075], w: 16, c: "rgba(50,50,50,.55)", b: 5 },
  { p: [-20, 1128, 60, 1095, 140, 1065, 200, 1045], w: 9, c: "rgba(255,255,255,.9)", b: 2 },
  { p: [-20, 1145, 40, 1110], w: 28, c: "rgba(255,255,255,.7)", b: 7 },
  { p: [-20, 1238, 60, 1225, 120, 1170, 200, 1145, 300, 1140], w: 11, c: "rgba(220,220,220,.6)", b: 3 },
  { p: [-20, 1175, 60, 1160, 110, 1190], w: 24, c: "rgba(60,60,60,.5)", b: 7 },
  { p: [470, 1165, 560, 1138, 670, 1118], w: 8, c: "rgba(230,230,230,.75)", b: 2 },
  { p: [-20, 1305, 230, 1250, 400, 1210, 500, 1170, 700, 1140, 1000, 1110, 1239, 1070], w: 20, c: "rgba(60,60,60,.65)", b: 3 },
  { p: [60, 1380, 200, 1400, 340, 1390], w: 120, c: "rgba(155,155,155,.3)", b: 18 },
  { p: [60, 1520, 260, 1500, 420, 1440], w: 120, c: "rgba(145,145,145,.3)", b: 18 },
  { p: [1239, 1160, 1120, 1230, 1020, 1310, 880, 1440, 730, 1480, 640, 1540, 560, 1650], w: 66, c: "rgba(45,45,45,.8)", b: 12 },
  { p: [640, 1540, 560, 1680, 540, 1850, 560, 2010, 700, 2150], w: 130, c: "rgba(45,45,45,.85)", b: 12 },
  { p: [-30, 1790, 10, 1730, 80, 1680], w: 40, c: "rgba(38,38,38,.75)", b: 8 },
  { p: [-30, 1910, 90, 1850, 200, 1740, 220, 1680], w: 20, c: "rgba(40,40,40,.85)", b: 5 },
  { p: [20, 1870, 90, 1790, 150, 1720], w: 22, c: "rgba(165,165,165,.45)", b: 9 },
  { p: [240, 1705, 310, 1678], w: 14, c: "rgba(130,130,130,.55)", b: 5 },
  { p: [530, 1705, 560, 1705], w: 16, c: "rgba(80,80,80,.45)", b: 4 },
  { p: [760, 1950, 900, 1990, 1040, 2080, 1239, 2090], w: 40, c: "rgba(45,45,45,.7)", b: 9 },
];
const rivers: Line[] = [
  { p: [400, 0, 330, 35, 370, 45, 372, 65, 320, 75], w: 2.500, c: "rgba(130,130,130,.8)", b: 0, t: .2 },
  { p: [320, 75, 325, 130, 298, 165, 350, 180, 375, 222, 405, 235, 415, 258, 488, 262, 495, 300, 520, 335, 550, 345, 585, 335, 605, 370, 635, 405, 660, 440, 680, 500], w: 6, c: "rgba(78,78,78,.85)", b: 0, t: .6 },
  { p: [320, 75, 240, 90, 180, 115], w: 2, c: "rgba(150,150,150,.7)", b: 0, t: .15 },
  { p: [1070, 8, 1085, 50, 1130, 110, 1170, 178, 1125, 205, 1085, 268, 1010, 290, 1005, 350, 992, 400, 940, 435, 830, 472, 740, 488, 690, 497], w: 8, c: "rgba(66,66,66,.85)", b: .5, t: .8 },
  { p: [992, 400, 1000, 440, 992, 485, 1005, 530, 1020, 548, 1060, 532, 1110, 542, 1148, 580, 1155, 640, 1152, 690, 1170, 725, 1205, 742, 1239, 740], w: 11, c: "rgba(58,58,58,.9)", b: .5, t: .7 },
  { p: [1000, 290, 1010, 240, 980, 170, 985, 130], w: 6, c: "rgba(80,80,80,.6)", b: 1, t: 1 },
  { p: [600, 360, 610, 320, 590, 280], w: 3, c: "rgba(80,80,80,.6)", b: .5, t: 1 },
  { p: [910, 300, 905, 230, 920, 180], w: 3, c: "rgba(80,80,80,.6)", b: .5, t: 1 },
  { p: [110, 860, 120, 850, 130, 865, 150, 880, 220, 905, 300, 925, 400, 940, 490, 958, 530, 990, 555, 990, 580, 1040, 595, 1050, 615, 1040, 612, 1070, 680, 1078, 690, 1050, 670, 1100, 760, 1095, 830, 1105, 850, 1145, 895, 1150, 930, 1190, 985, 1225, 1000, 1250, 985, 1270, 1010, 1300], w: 8, c: "rgba(56,56,56,.85)", b: .5, t: .8 },
  { p: [5, 415, 12, 362, 42, 345, 45, 240, 5, 235], w: 3, c: "rgba(95,95,95,.75)", b: .3, t: .4 },
  { p: [0, 520, 35, 590, 40, 640, 60, 700, 95, 830, 112, 860], w: 8, c: "rgba(70,70,70,.7)", b: 1, t: .8 },
  { p: [150, 480, 158, 540, 160, 600, 128, 655], w: 5, c: "rgba(76,76,76,.7)", b: 0, t: .9 },
  { p: [470, 450, 540, 470, 620, 465, 680, 500], w: 4, c: "rgba(70,70,70,.7)", b: .5, t: .9 },
  { p: [655, 820, 668, 900, 680, 930, 685, 1000, 680, 1050], w: 6, c: "rgba(66,66,66,.8)", b: 0, t: .8 },
  { p: [460, 790, 560, 820, 655, 820, 760, 820, 860, 780], w: 4, c: "rgba(70,70,70,.6)", b: .5, t: .6 },
  { p: [350, 860, 390, 900, 430, 920], w: 5, c: "rgba(66,66,66,.7)", b: 0, t: .8 },
  { p: [680, 1050, 740, 990, 800, 940, 880, 830], w: 4, c: "rgba(80,80,80,.5)", b: .5, t: .8 },
  { p: [290, 1060, 350, 1130, 370, 1200, 420, 1270, 490, 1370, 530, 1430, 530, 1500, 560, 1540], w: 4, c: "rgba(66,66,66,.7)", b: 0, t: .8 },
  { p: [130, 1180, 220, 1250, 270, 1310, 340, 1330, 430, 1340], w: 4, c: "rgba(66,66,66,.6)", b: 0, t: .8 },
  { p: [235, 1430, 290, 1530, 315, 1620, 400, 1610, 460, 1570, 450, 1490, 400, 1420], w: 4, c: "rgba(60,60,60,.6)", b: 0, t: .8 },
  { p: [110, 1500, 200, 1590, 220, 1690], w: 4, c: "rgba(60,60,60,.6)", b: 0, t: .8 },
  { p: [0, 2010, 90, 2010, 150, 2015, 260, 2010], w: 6, c: "rgba(40,40,40,.8)", b: 1, t: .8 },
  { p: [0, 2175, 100, 2160, 180, 2150, 290, 2190], w: 5, c: "rgba(40,40,40,.8)", b: 1, t: .8 },
  { p: [170, 1818, 260, 1810, 380, 1800, 490, 1790], w: 3, c: "rgba(40,40,40,.7)", b: .5, t: .7 },
  { p: [120, 1870, 200, 1905, 280, 1905], w: 3, c: "rgba(40,40,40,.7)", b: .5, t: .7 },
  { p: [270, 2460, 335, 2405, 345, 2390], w: 4, c: "rgba(42,42,42,.7)", b: .5, t: .4 },
  { p: [950, 2000, 945, 1900, 910, 1800, 860, 1680, 760, 1580], w: 7, c: "rgba(48,48,48,.7)", b: 1, t: .7 },
  { p: [1239, 2080, 1180, 1960, 1130, 1860, 1060, 1800, 1010, 1760], w: 8, c: "rgba(46,46,46,.7)", b: 1, t: .7 },
  { p: [820, 1540, 950, 1560, 1060, 1580], w: 4, c: "rgba(46,46,46,.7)", b: .5, t: .6 },
  { p: [1145, 1860, 1145, 1700, 1180, 1600], w: 8, c: "rgba(50,50,50,.5)", b: 2, t: .7 },
  { p: [1000, 1450, 1100, 1500, 1180, 1560], w: 4, c: "rgba(46,46,46,.7)", b: .5, t: .6 },
  { p: [520, 2220, 600, 2260, 660, 2340], w: 4, c: "rgba(46,46,46,.6)", b: 1, t: .3 },
  { p: [960, 1140, 975, 1190, 995, 1225], w: 3, c: "rgba(50,50,50,.8)", b: 0, t: .6 },
];

@customElement("elevation-raster")
export class ElevationRaster extends LitElement {
  static styles = css`
    :host { display: block; }
    canvas { display: block; }
  `;
  render() {
    return html`<canvas width=${W} height=${H}></canvas>`;
  }
  firstUpdated() {
    const c = (this.renderRoot.querySelector("canvas") as HTMLCanvasElement).getContext("2d")!;
    let img = c.createImageData(W, H);
    const ease = (t: number) => t * t * (3 - 2 * t);
    for (let y = 0; y < H; y++) {
      for (let x = 0; x < W; x++) {
        const wx = x + (fbm(x / 34, y / 34, 3) - 0.45) * 30;
        const wy = y + (fbm(x / 34 + 50, y / 34, 3) - 0.45) * 26 + (y < 160 ? (x - 150) * 0.1 : 0);
        const gx = Math.min(7.999, Math.max(0, wx / (W / 8)));
        const gy = Math.min(15.999, Math.max(0, wy / (H / 16)));
        const i = Math.floor(gx), j = Math.floor(gy);
        const fx = ease(gx - i), fy = ease(gy - j);
        const top = relief[j][i] * (1 - fx) + relief[j][i + 1] * fx;
        const bot = relief[j + 1][i] * (1 - fx) + relief[j + 1][i + 1] * fx;
        const k = (y * W + x) * 4;
        img.data[k] = img.data[k + 1] = img.data[k + 2] = top * (1 - fy) + bot * fy;
        img.data[k + 3] = 255;
      }
    }
    c.putImageData(img, 0, 0);

    let seed = 7;
    const rnd = () => ((seed = (Math.imul(seed, 1664525) + 1013904223) >>> 0) / 4294967296);
    c.lineCap = "round";
    c.lineJoin = "round";
    const path = (p: number[], wob: number) => {
      c.beginPath();
      c.moveTo(p[0] / U, p[1] / U);
      for (let i = 2; i < p.length; i += 2) {
        const x0 = p[i - 2] / U, y0 = p[i - 1] / U, x1 = p[i] / U, y1 = p[i + 1] / U;
        const n = Math.max(1, Math.round(Math.hypot(x1 - x0, y1 - y0) / 4));
        for (let s = 1; s <= n; s++) {
          const r = s < n ? wob : 0;
          c.lineTo(x0 + ((x1 - x0) * s) / n + (rnd() - 0.5) * r, y0 + ((y1 - y0) * s) / n + (rnd() - 0.5) * r);
        }
      }
    };
    for (const l of bands) {
      c.filter = `blur(${l.b}px)`;
      c.strokeStyle = l.c;
      c.lineWidth = l.w / U;
      path(l.p, 3);
      c.stroke();
    }
    c.filter = "none";

    // Texture: long folds, branching valleys and fine grain, strongest on mid-height ground.
    const src = c.getImageData(0, 0, W, H);
    img = c.createImageData(W, H);
    for (let y = 0; y < H; y++) {
      for (let x = 0; x < W; x++) {
        const k = (y * W + x) * 4;
        const wx = x + (fbm(x / 16, y / 16, 3) - 0.45) * 22;
        const wy = y + (fbm(x / 16 + 50, y / 16, 3) - 0.45) * 22;
        // a small jitter frays the edges of the broad shapes
        const sx = Math.min(W - 1, Math.max(0, Math.round(x + (fbm(x / 5, y / 5, 3) - 0.45) * 9)));
        const sy = Math.min(H - 1, Math.max(0, Math.round(y + (fbm(x / 5 + 40, y / 5, 3) - 0.45) * 7)));
        const crisp = src.data[k] > 225 ? 1 : 0;
        let v = crisp ? src.data[k] : src.data[(sy * W + sx) * 4];
        let amp = Math.min(1, Math.max(0.05, (v - 44) / 75));
        if (v > 215) amp *= Math.max(0.03, (255 - v) / 40);
        const u = wx * 0.94 - wy * 0.34, q = wx * 0.34 + wy * 0.94;
        const fold = fbm(u / 60, q / 11, 4) - 0.45;
        const patch = fbm(x / 18 + 31, y / 12 + 7, 4) - 0.46;
        const vein = Math.abs(fbm(wx / 9, wy / 9, 3) - 0.44);
        const vein2 = Math.abs(fbm(wx / 26 + 90, wy / 22, 4) - 0.47);
        const south = y > 480 ? 0.5 : 1;
        v += fold * 58 * south * amp + patch * 46 * (south + 0.1) * amp;
        v -= Math.max(0, 1 - vein / 0.05) * 15 * amp;
        v -= Math.max(0, 1 - vein2 / 0.028) * 20 * amp;
        v += (fbm(x / 2.5, y / 2.5, 2) - 0.37) * 34 * amp + (hash(x, y) - 0.5) * 1.500;
        img.data[k] = img.data[k + 1] = img.data[k + 2] = Math.max(44, Math.min(255, v));
        img.data[k + 3] = 255;
      }
    }
    c.putImageData(img, 0, 0);

    c.globalCompositeOperation = "multiply";
    const twig = (x: number, y: number, a: number, len: number, w: number, al: number) => {
      if (len < 2) return;
      c.lineWidth = w;
      c.strokeStyle = `rgba(110,110,110,${al})`;
      const kids: [number, number, number][] = [];
      c.beginPath();
      c.moveTo(x, y);
      for (let s = 0; s < len; s += 2) {
        const b = a + (rnd() - 0.5) * 1.300;
        x += Math.cos(b) * 2;
        y += Math.sin(b) * 2;
        c.lineTo(x, y);
        if (rnd() < 0.32) kids.push([x, y, a + (rnd() < 0.5 ? -1 : 1) * (0.6 + rnd() * 0.4)]);
      }
      c.stroke();
      for (const [kx, ky, ka] of kids) twig(kx, ky, ka, len * 0.45, w * 0.8, al * 0.8);
    };
    for (const l of rivers) {
      const t = l.t ?? 0;
      for (let i = 2; i < l.p.length; i += 2) {
        const x0 = l.p[i - 2] / U, y0 = l.p[i - 1] / U, x1 = l.p[i] / U, y1 = l.p[i + 1] / U;
        const ang = Math.atan2(y1 - y0, x1 - x0), d = Math.hypot(x1 - x0, y1 - y0);
        for (let s = 0; s < d; s += 5) {
          const f = s / d;
          twig(x0 + (x1 - x0) * f, y0 + (y1 - y0) * f, ang + (rnd() < 0.5 ? -1 : 1) * (0.8 + rnd() * 0.7), 5 + rnd() * 13, 0.9, 0.42 * t);
        }
      }
    }
    for (let i = 0; i < 200; i++) {
      const y = 60 + rnd() * 660;
      const x = rnd() * W;
      if (y < 110 && x < 190) continue;
      twig(x, y, 1 + (rnd() - 0.5) * 2.500 + (rnd() < 0.3 ? 3.140 : 0), 8 + rnd() * 13, 0.8, y < 430 ? 0.34 : 0.24);
    }
    c.globalCompositeOperation = "source-over";
    for (const l of rivers) {
      c.filter = l.b ? `blur(${l.b}px)` : "none";
      c.strokeStyle = l.c;
      c.lineWidth = (l.w * 0.9) / U;
      path(l.p, 2.500);
      c.stroke();
    }
    c.filter = "none";
    c.fillStyle = "#0c0c0c";
    for (const [x, y] of [[272, 370], [303, 366], [137, 404], [76, 602], [32, 607], [405, 303], [295, 103], [210, 124]]) c.fillRect(x, y, 3, 1.500);
  }
}

/* ------------------------------------------------------------ ArcMap window */

const cap = html`<i class="cap"><b></b></i>`;
const seg = (x0: number, x1: number, cells: Cell[]): Cell =>
  [x0, x1 - x0, html`<div class="seg">${strip(x0, [[x0 + 2, 2, html`<i class="grip"></i>`] as Cell, ...cells, [x1 - 11, 11, cap] as Cell])}</div>`];

const ck = (on: boolean) => html`<svg class="ic" width="11" height="11" viewBox="0 0 11 11"><path d="M.7.7h9.600v9.600H.7z" fill="#fff" stroke="#111" stroke-width="1.300"/>${on ? svg`<path d="M2.500 5.300l2 2.200 4-4.500" fill="none" stroke="#000" stroke-width="1.800"/>` : ""}</svg>`;
const ex = html`<svg class="ic" width="9" height="9" viewBox="0 0 9 9"><path d="M.5.5h8v8h-8z" fill="#f6f6f6" stroke="#999"/><path d="M2 4.500h5" stroke="#3558a8"/></svg>`;

@customElement("arc-window")
export class ArcWindow extends LitElement {
  static styles = [shared, css`
    :host { box-sizing: border-box; display: flex; flex-direction: column; width: 1087px; height: 1153px; border-top: 1px solid #3a3a3e; background: linear-gradient(90deg, #f0f0f0, #f3f3f3 45%, #fdfdfd 85%); font: 11.600px "Open Sans", "Noto Sans", sans-serif; color: #111; }
    .title { height: 30px; padding-bottom: 1px; background: #fff; display: flex; color: #8b8b8b; }
    .menu { height: 26px; padding-bottom: 1px; display: flex; }
    .row { height: 26px; padding-bottom: 2px; display: flex; flex: none; }
    .row.s { height: 25px; padding-bottom: 1px; }
    .row.e { height: 27px; padding: 2px 0 1px; }
    .seg { width: 100%; height: 24px; display: flex; background: linear-gradient(#fbfbfb, #f1f1f1 60%, #ececec); border-radius: 2px; }
    .grip { width: 2px; height: 18px; background: repeating-linear-gradient(#aaa 0 2px, transparent 2px 4px); }
    .cap { width: 11px; height: 25px; margin-top: 1px; background: linear-gradient(#efefef, #c8c8c8 60%, #8f8f8f); display: flex; flex-direction: column; justify-content: flex-end; align-items: center; padding-bottom: 2px; border-radius: 0 0 2px 0; }
    .cap b { width: 6px; height: 6px; border-top: 1px solid #111; }
    .cap b::after { content: ""; display: block; border: 3px solid transparent; border-top-color: #111; margin-top: 2px; border-bottom: 0; }
    .combo { height: 21px; background: #fff; border: 1px solid #767676; justify-content: flex-start; }
    .combo.dis { background: #cfcfcf; border-color: #bbb; }
    .combo.lt { border-color: #bcbcbc; }
    .hot { height: 22px; border: 1px solid #3c93e6; background: #e3effb; }
    .hot.g { border-color: #a9b8cc; background: #dde5f0; }
    .arial { font-family: "Liberation Sans", Arial, sans-serif; }
    .ser { font: bold 14px "Liberation Serif", serif; color: #111; }
    .ser.i { font-style: italic; }
    .ser.u { text-decoration: underline; }
    .big { font: bold 16px/13px "Liberation Serif", serif; display: flex; flex-direction: column; align-items: center; }
    .col { display: flex; flex-direction: column; align-items: center; gap: 1px; }
    .ink { width: 18px; height: 3px; }
    .k { background: #000; } .y { background: #fffaa8; } .g { background: #4cf000; }
    .srch { font: italic 12px "Liberation Sans", sans-serif; color: #8a8a8a; }
    .hl { background: #2f8ffb; color: #1b4f8c; height: 15px; }
    .body { flex: 1; display: flex; min-height: 0; }
    .toc { width: 286px; display: flex; flex-direction: column; }
    .thead { height: 20px; background: linear-gradient(90deg, #bfcddb, #d6e3f2); display: flex; }
    .tbar { height: 26px; display: flex; background: linear-gradient(#fbfbfb, #f0f0f0); }
    .list { flex: 1; background: #fff; border: 1px solid #828790; border-left: 0; margin-right: 1px; }
    .tr { height: 18px; display: flex; }
    .bold { font-weight: 700; }
    .selt { background: #3196ff; color: #fff; height: 18px; padding-left: 2px; justify-content: flex-start; }
    .sw { width: 15px; height: 11px; border: 1px solid #6e6e6e; margin-top: 2px; }
    .leg { height: 72px; display: flex; padding: 1px 0 0 60px; }
    .ramp { width: 13px; height: 36px; background: linear-gradient(#f4f4f4, #000); }
    .legt { display: flex; flex-direction: column; gap: 18px; padding-left: 5px; line-height: 18px; margin-top: -3px; }
    .tabs { height: 21px; display: flex; }
    .tab { display: flex; align-items: center; gap: 3px; height: 19px; padding: 0 3px 0 5px; border: 1px solid #a8a8a8; border-top: 0; border-radius: 0 0 4px 4px; color: #777; }
    .tab.on { background: #fff; color: #111; margin-left: 2px; }
    .view { width: 775px; margin-left: 3px; display: flex; flex-direction: column; border-left: 2px solid #7b7b7b; border-top: 2px solid #707070; }
    .vm { flex: 1; display: flex; min-height: 0; }
    .data { flex: 1; background: #fefefe; padding: 41px 0 0 173px; display: grid; justify-content: start; align-content: start; }
    .data > * { grid-area: 1 / 1; }
    .vs { width: 17px; background: #f0f0f0; border-left: 1px solid #d8d8d8; display: flex; flex-direction: column; align-items: center; padding: 2px 0 1px; color: #444; }
    .vthumb { width: 14px; height: 529px; margin-top: 323px; background: #cdcdcd; margin-bottom: auto; flex: none; }
    .vb { height: 19px; display: flex; background: #f0f0f0; border-top: 1px solid #ddd; }
    .thumb { height: 13px; background: #cdcdcd; }
    .mv { height: 18px; background: #bcdcf6; border: 1px solid #7cb9ea; }
    .side { width: 23px; padding: 2px 0 0 4px; }
    .ctab { height: 72px; width: 19px; border: 1px solid #8a8a8a; border-right: 0; border-radius: 4px 0 0 4px; background: #f4f4f4; padding-top: 4px; display: flex; flex-direction: column; align-items: center; gap: 4px; color: #666; }
    .vt { writing-mode: vertical-rl; font: 12px "Liberation Sans", sans-serif; letter-spacing: .4px; }
    .status { height: 21px; display: flex; background: #f0f0f0; border-top: 1px solid #fff; }
    .county { pointer-events: none; margin: 384px 0 0 160px; }
  `];

  render() {
    const A = 8;
    const row = (cells: Cell[], cls = "") => html`<div class="row ${cls}">${strip(A, cells)}</div>`;
    const combo = (x: number, w: number, inner: Cell[], cls = "") => box(x, w, `combo ${cls}`, strip(x + 1, inner));
    const ink = (cx: number, name: string, cls: string): Cell => [cx - 9, 18, html`<div class="col">${name === "A" ? html`<span class="big">A</span>` : icon(name, 15)}<i class="ink ${cls}"></i></div>`];
    return html`
      <div class="title">${strip(A, [ic(24, "arc", 17), tx(37, 95, "Untitled - ArcMap"), ic(981, "wmin"), ic(1026, "wmax"), ic(1073, "wcls")])}</div>
      <div class="menu">${strip(A, [tx(20, 18, "File"), tx(54, 20, "Edit"), tx(90, 25, "View"), tx(131, 59, "Bookmarks"), tx(206, 29, "Insert"), tx(251, 48, "Selection"), tx(315, 78, "Geoprocessing"), tx(409, 56, "Customize"), tx(481, 49, "Windows"), tx(546, 25, "Help")])}</div>
      ${row([seg(12, 628, [ic(29, "doc"), ic(51, "open"), ic(73, "save"), ic(95, "print"), sep(108), ic(122, "cut"), ic(146, "copy"), ic(167, "paste"), ic(189, "x", 13), sep(202), ic(217, "undo"), ic(240, "redo"), sep(251), ic(267, "add"), car(282), sep(292),
        combo(295, 148, [tx(299, 57, "1:1,027,880", "arial"), ic(434, "chev", 13)]), sep(446), ic(460, "edit"), sep(474), ic(488, "toc"), ic(510, "cat"), ic(532, "search"), ic(554, "tool"), ic(576, "py"), sep(589), ic(604, "model")])])}
      ${row([seg(12, 536, [ic(28, "zin"), ic(50, "zout"), ic(73, "hand"), ic(95, "globe"), sep(108), ic(123, "fixin"), ic(145, "fixout"), sep(158), ic(173, "back"), ic(194, "fwd"), sep(208), ic(223, "sel"), car(238), ic(256, "clr"), sep(269), ic(284, "ptr"), sep(297),
        box(301, 22, "hot", icon("info")), ic(333, "bolt"), ic(356, "popup"), sep(369), ic(384, "meas"), sep(398), ic(411, "bino"), ic(434, "route"), ic(456, "xy"), sep(470), ic(484, "clock"), sep(498), ic(512, "view")])])}
      ${row([seg(12, 562, [tx(23, 87, "Business Analyst"), car(115), box(121, 22, "hot", icon("ba")), ic(155, "ring"), tx(172, 63, "Evaluate Site"), car(242), tx(253, 29, "Maps"), car(287), ic(304, "bolt2"), sep(317), ic(331, "opts", 15), sep(346),
        combo(349, 167, [tx(410, 104, "Businesses search...", "srch")]), ic(527, "mag"), car(543)])], "s")}
      ${row([seg(12, 142, [tx(23, 77, "Address Coder"), car(123)])], "s")}
      ${row([seg(12, 406, [tx(23, 82, "Territory Design"), car(112), sep(120), ic(135, "terr"), ic(157, "tarr"), ic(179, "tbox"), sep(192), ic(207, "tsel"), sep(220), combo(224, 147, [ic(362, "chev", 13)], "dis")]),
        seg(411, 1095, [tx(421, 44, "Drawing"), car(471), ic(487, "ptr"), ic(509, "rot"), ic(531, "zsel"), sep(544), ic(558, "rect", 15), car(574), [584, 14, html`<span class="big">A</span>`], car(607), ic(625, "poly"), sep(638),
          combo(642, 171, [ic(652, "font", 15), tx(663, 20, "Arial", "arial"), ic(804, "chev", 13)]), combo(813, 46, [tx(817, 12, "10", "arial"), ic(850, "chev", 13)]),
          [865, 11, html`<span class="ser">B</span>`], [887, 11, html`<span class="ser i">I</span>`], [909, 12, html`<span class="ser u">U</span>`], sep(927), ink(943, "A", "k"), car(962), ink(981, "bucket", "y"), car(1000), ink(1019, "pen", "k"), car(1038), ink(1057, "dot", "g"), car(1076)])], "s")}
      ${row([seg(439, 820, [ic(455, "pzin"), ic(477, "pzout"), ic(499, "phand"), ic(521, "pall"), ic(543, "pone"), sep(557), ic(571, "pin"), ic(593, "pout"), sep(606), ic(621, "pback"), ic(643, "pfwd"),
        combo(655, 59, [[657, 27, html`<fit-text class="hl arial" w="27">100%</fit-text>`], ic(704, "chev", 12)], "lt"), sep(717), box(720, 22, "hot g", icon("draft")), ic(753, "focus"), ic(775, "chg"), ic(796, "ddp")])], "e")}
      <div class="body">
        <div class="toc">
          <div class="thead">${strip(A, [tx(12, 95, "Table Of Contents"), ic(268, "pinp", 14), ic(284, "cls", 12)])}</div>
          <div class="tbar">${strip(A, [box(12, 22, "hot", icon("tree")), ic(45, "src"), ic(67, "vis"), ic(89, "sell"), sep(102), ic(116, "opts", 14)])}</div>
          <div class="list">
            <div class="tr">${strip(A, [[17, 9, ex], ic(40, "layers"), tx(53, 35, "Layers", "bold")])}</div>
            <div class="tr">${strip(A, [[36, 9, ex], [53, 11, ck(true)], box(70, 49, "selt", html`<fit-text w="45">Del_cnty</fit-text>`)])}</div>
            <div class="tr">${strip(A, [[68, 15, html`<i class="sw" style=${styleMap({ background: "#b8f2da" })}></i>`]])}</div>
            <div class="tr">${strip(A, [[36, 9, ex], [53, 11, ck(false)], tx(72, 127, "PaMunicipalities2017_01")])}</div>
            <div class="tr">${strip(A, [[68, 15, html`<i class="sw" style=${styleMap({ background: "#dcf8ba" })}></i>`]])}</div>
            <div class="tr">${strip(A, [[36, 9, ex], [53, 11, ck(true)], tx(72, 44, "elev_mo")])}</div>
            <div class="tr">${strip(A, [tx(91, 29, "Value")])}</div>
            <div class="leg"><i class="ramp"></i><div class="legt"><fit-text w="74">High : 626.414</fit-text><fit-text w="75">Low : -85.7848</fit-text></div></div>
            <div class="tr">${strip(A, [[53, 11, ck(false)], tx(72, 177, "Business Analyst Network Barriers")])}</div>
          </div>
          <div class="tabs"><div class="tab on">${icon("toc", 15)}<fit-text w="95">Table Of Contents</fit-text></div><div class="tab">${icon("ba", 15)}<fit-text w="87">Business Analyst</fit-text></div></div>
        </div>
        <div class="view">
          <div class="vm">
            <div class="data"><elevation-raster></elevation-raster>${this.county()}</div>
            <div class="vs">${icon("up", 14)}<i class="vthumb"></i>${icon("dn", 14)}</div>
          </div>
          <div class="vb">${strip(299, [box(300, 16, "mv", icon("mapv", 14)), ic(325, "layv", 14), sep(335), ic(349, "refresh", 13), ic(367, "pause", 13), ic(383, "lt", 14), [832, 182, html`<div class="bx thumb"></div>`], ic(1047, "rt", 14)])}</div>
        </div>
        <div class="side"><div class="ctab">${icon("cat", 15)}<span class="vt">Catalog</span></div></div>
      </div>
      <div class="status">${strip(A, [tx(824, 156, "-75.921  40.5 Decimal Degrees")])}</div>`;
  }

  private county() {
    return html`<svg class="county" width="160" height="110" viewBox="36 57 480 330" overflow="visible">
      <path d="M343 54L387 112 403 109 442 163 480 178 483 196 496 212 486 216 484 238 462 262 462 285 520 285 528 295 490 310 455 318 362 320 315 350 280 377 210 340 150 328 60 326 63 312 53 296 60 284 95 258 100 244 130 220 150 210 165 194 247 156 250 150 240 132 290 104 280 84Z" fill="#b8f2da" stroke="#70786f" stroke-width="2"/>
      <path d="M131 222l12-14 3 20z" fill="#5c5c5c"/>
      <g fill="none" stroke="#5f6c66" stroke-width="2.600" stroke-linejoin="round">
        <path d="M290 104l36 40 6-6 22-8 33-18M332 138l24-2 18 20 3 34 65-27M326 144l-20 14-38 22-10-16-10-14M262 180l74 38 22-12 19-16 30 12M262 180l-5 18-53 28-12-12-14 2-14-22M257 198l-70 36 10 14M187 234l38 10 30 16 36 14 12 18M190 236l-10 2-68 28-14-10M180 238l32 56M112 266l4 12 14 16-20 8-6 24M212 294l-70 32M212 294l12-24 6-6 40 4 36 24 18 4M212 294l6 22-8 22M214 296l70 34 10 8M264 178l44 22 28 46 6 30M336 218l12 34 8 30-30 10M342 222l2 40"/>
        <path stroke-width="2.200" d="M260 352l40-6 6-12 12 30M268 362l26-10 12-18 14 10M276 346l24-20 20-6M300 228l14-8 8 14-18 12zM304 246l14 6 6 16-12 10-10-12zM312 278l10 10-14 10M300 296l32-4M302 312l14-10 12 6 10-6M320 320l16-4 20-12M330 286l26-6"/>
        <path stroke-width="2.200" d="M377 238l18-8 2 16-14 12zM372 236l-16 24 12 12 20-10 24-6M368 272l-6 48M384 262l-4 18 16 10 14-14M396 290l2 26M402 256l4 30-4 30M376 288l26-10 20-2M412 232l22-10 30-6 20-14M410 214l16-8 14 8 22-8 20 6M406 232l14 14-4 18 18-4 2 20M426 208l-4 18 18 10-6 22 22 6 4 18M440 196l4 22 18 8-8 20 18 12M460 196l-6 24 20 12 10-4M422 246l34 4 26-8M434 260l28-12M410 214l-6 18M420 272l-12 12 32 2 20-6M446 230l-18 6M464 206l8 28M340 254l18-14 8 12"/>
      </g>
    </svg>`;
  }
}

/* -------------------------------------------------------------- Word window */

const hticks: { x: number; k: string }[] = [];
for (let i = -1; i <= 53; i++) hticks.push({ x: i, k: i > 0 && i % 8 === 0 ? String(i / 8) : i % 4 === 0 && i > 0 ? "|" : i === 0 ? "" : "·" });

@customElement("word-window")
export class WordWindow extends LitElement {
  static styles = [shared, css`
    :host { box-sizing: border-box; display: flex; flex-direction: column; width: 775px; height: 1155px; background: #e6e6e6; border: solid #2b579a; border-width: 0 1px 1px; font: 11.600px "Open Sans", "Noto Sans", sans-serif; color: #444; }
    .top { height: 60px; background: #2b579a; color: #fff; display: grid; grid-template-rows: 36px 24px; }
    .top > * { grid-column: 1; }
    .deco { grid-row: 1 / 3; align-self: start; }
    .tb { grid-row: 1; display: flex; height: 32px; }
    .tl { padding-top: 7px; }
    .tabs { grid-row: 2; display: flex; }
    .tabs .sep { height: 23px; background: #8aa3c8; align-self: flex-start; }
    .home { height: 24px; background: #f1f1f1; color: #2b579a; }
    .share { height: 23px; background: #16427c; gap: 3px; align-self: flex-start; }
    .soft { color: #c4cfe2; }
    .rib { height: 93px; background: #f1f1f1; border-bottom: 1px solid #d2d2d2; display: flex; padding-top: 3px; }
    .g { display: flex; flex-direction: column; height: 86px; border-right: 1px solid #d5d5d5; flex: none; }
    .g.end { border: 0; flex: 1; }
    .r { height: 23px; display: flex; }
    .lab { height: 17px; margin-top: auto; display: flex; margin-bottom: -3px; color: #666; }
    .r .sep { height: 21px; background: #d5d5d5; }
    .r .car { border-width: 3.500px 3px 0; color: #777; }
    .clip { display: flex; height: 69px; }
    .paste { width: 47px; display: flex; flex-direction: column; align-items: center; padding-top: 5px; color: #444; }
    .paste svg { margin-left: 6px; }
    .paste fit-text { line-height: 16px; margin: 2px 0 0 3px; }
    .paste .car { margin: 6px 0 0 2px; color: #777; }
    .cc { display: flex; flex-direction: column; justify-content: space-around; padding: 2px 0 2px; margin-left: 2px; }
    .cb { height: 22px; background: #fff; border: 1px solid #c0c0c0; justify-content: flex-start; }
    .b { font-weight: 700; color: #444; font-size: 13px; }
    .x { font-size: 11px; }
    .i { font: italic bold 14px "Liberation Serif", serif; }
    .u { text-decoration: underline; }
    .st { text-decoration: line-through; }
    .sm { font-size: 7px; color: #3f76b5; line-height: 0; }
    .pr { background: #c5c5c5; height: 22px; }
    .col { display: flex; flex-direction: column; align-items: center; }
    .ink { width: 16px; height: 4px; }
    .ltr { font-size: 14px; line-height: 13px; font-weight: 600; color: #555; }
    .out { color: #fff; -webkit-text-stroke: 1px #3f76b5; font-size: 17px; line-height: 18px; font-weight: 700; }
    .gal { display: flex; height: 60px; margin: 3px 7px 0 5px; background: #fff; border: 1px solid #ababab; }
    .gi { display: flex; flex-direction: column; align-items: center; justify-content: space-between; padding: 10px 0 4px; width: 72px; flex: none; color: #555; }
    .gi .s { font-family: "Liberation Serif", serif; color: #000; line-height: 22px; font-size: 12.500px; }
    .gi .s.l { font-size: 14.500px; }
    .gi .nm { line-height: 16px; }
    .gs { width: 15px; margin-left: auto; border-left: 1px solid #ababab; display: flex; flex-direction: column; color: #777; }
    .gs div { flex: 1; display: flex; align-items: center; justify-content: center; border-bottom: 1px solid #ababab; }
    .gs div:first-child { background: #e3e3e3; color: #b8b8b8; } .gs div:last-child { border: 0; }
    .upc { transform: rotate(180deg); }
    .ed { display: flex; flex-direction: column; align-items: center; }
    .edb { width: 30px; height: 30px; border: 1px solid #c6c6c6; background: #fafafa; display: flex; align-items: center; justify-content: center; margin-top: 1px; }
    .ed fit-text { margin: 4px 0 7px; line-height: 16px; color: #444; }
    .ed .car { color: #777; }
    .ruler { height: 24px; display: flex; padding: 5px 0 0 3px; }
    .tabk { width: 16px; height: 15px; background: #fdfdfd; border: 1px solid #d4d4d4; display: flex; align-items: flex-end; justify-content: center; padding-bottom: 3px; margin-right: 4px; }
    .tabk i { width: 5px; height: 5px; border: solid #555; border-width: 0 0 2px 2px; }
    .hr { width: 733px; height: 10px; background: linear-gradient(90deg, #c6c6c6 0 24px, #fff 24px 713px, #c6c6c6 713px); display: flex; font-size: 9px; color: #333; line-height: 10px; padding-left: 4.800px; }
    .hr span { flex: none; width: 13.250px; display: flex; justify-content: center; align-items: center; }
    .dt { width: 1px; height: 2px; background: #444; } .hf { width: 1px; height: 5px; background: #444; }
    .mk { position: relative; width: 10px; overflow: visible; top: 4px; }
    .main { flex: 1; display: flex; min-height: 0; }
    .vr { width: 11px; margin-left: 5px; height: 938px; background: linear-gradient(#fff 0 916px, #c6c6c6 916px); font-size: 9px; color: #333; overflow: hidden; }
    .vr div { height: 13.250px; display: flex; align-items: center; justify-content: center; }
    .vr div:first-child { margin-top: -2px; }
    .vr b { font-weight: 400; transform: rotate(-90deg); line-height: 10px; }
    .vr .dt { width: 2px; height: 1px; } .vr .hf { width: 5px; height: 1px; }
    .page { width: 732px; margin-left: 8px; height: 938px; background: #fff; color: #000; font: 18.500px/20px "Liberation Serif", serif; padding: 0 0 0 24px; }
    .shot { margin-left: 9px; width: 578px; height: 406px; border: 1px solid #999; border-top: 0; box-shadow: 1px 2px 3px #aaa; padding: 0 10px 10px 10px; background: #fff; margin-bottom: 29px; }
    .panel { height: 395px; width: 557px; background: linear-gradient(90deg, #f1f1f1 549px, #f6f6f6 549px); border-top: 1px solid #a5a5a5; padding: 8px 0 0 9px; font: 9.300px/12px "Open Sans", sans-serif; color: #3a3a3a; display: grid; grid-template-columns: 506px 16px 1fr; column-gap: 7px; grid-auto-rows: min-content; }
    .lb { grid-column: 1 / 4; display: flex; align-items: center; justify-content: flex-start; position: relative; }
    .scr { margin-left: auto; margin-right: 0; color: #aaa; }
    .f { height: 15px; background: #fff; border: 1px solid #acacac; display: flex; align-items: center; padding-left: 3px; }
    .f.w { grid-column: 1 / 3; padding-right: 2px; justify-content: space-between; }
    .f.act { border-color: #4a9be0; }
    .f.r1 { justify-content: flex-end; }
    .ls { height: 120px; background: #fff; border: 1px solid #abadb3; display: flex; flex-direction: column; padding: 2px; background-image: repeating-linear-gradient(#fff 0 11.500px, #f2f2f2 11.500px 12.500px); }
    .ls div { height: 12.500px; display: flex; align-items: center; gap: 2px; }
    .bs { display: flex; flex-direction: column; gap: 5.500px; padding-top: 1px; }
    .bt { width: 16px; height: 17.500px; background: #e4e4e4; border: 1px solid #c8c8c8; display: flex; align-items: center; justify-content: center; margin-bottom: -2.500px; }
    .bs .bt { margin: 0; }
    .bt.on { border: 2px solid #4a9be0; background: #cfe6fa; }
    .grn { position: absolute; left: -9px; width: 6px; height: 6px; background: #12d512; border-radius: 50%; }
    .p { display: flex; margin-bottom: 14.200px; }
    .n { width: 26.500px; }
    .t { display: flex; flex-direction: column; align-items: flex-start; }
    .t fit-text + fit-text { margin-top: .6px; }
    .h { font: 700 22.500px/26px Lato, "Open Sans", sans-serif; color: #4f81bd; margin: 18px 0 14px; }
    .sq { text-decoration: underline wavy #e22 1px; text-underline-offset: 2px; text-decoration-skip-ink: none; }
    .cur { width: 1px; height: 20px; background: #000; }
    .act2 { width: 237px; margin: 80px 0 0 453px; color: #b6b6b6; font: 14px/22px "Open Sans", sans-serif; display: flex; flex-direction: column; align-items: flex-start; }
    .act2 .a { font-size: 19px; line-height: 24px; color: #b4b4b4; }
    .stat { height: 23px; background: #f1f1f1; border-top: 1px solid #c6c6c6; display: flex; font-size: 11px; padding-bottom: 1px; }
    .on2 { background: #cacaca; height: 21px; }
    .line { height: 1px; background: #999; width: 100%; }
    .knob { width: 4px; height: 11px; background: #666; }
    .pm { font-weight: 700; color: #555; font-size: 13px; line-height: 16px; }
  `];

  render() {
    const A = 1098;
    const st = (x: number, w: number, t: string, cls = "") => tx(x, w, t, cls);
    const lab = (start: number, x: number, w: number, t: string, l?: number) => html`<div class="lab">${strip(start, l ? [tx(x, w, t), ic(l, "launch", 13)] : [tx(x, w, t)])}</div>`;
    const r = (start: number, cells: Cell[]) => html`<div class="r">${strip(start, cells)}</div>`;
    const v = icon("chev", 9);
    const btn = (t: unknown, cls = "") => html`<div class="bt ${cls}">${t}</div>`;
    const sy = (d: string) => html`<svg class="ic" width="12" height="12" viewBox="0 0 12 12"><path d=${d} stroke="#111" stroke-width="2.200" fill="none"/></svg>`;
    const li = (n: string, t: unknown) => html`<div class="p"><span class="n">${n}</span><div class="t">${t}</div></div>`;
    const vt: unknown[] = [];
    for (let i = 0; i < 72; i++) {
      const k = i + 3;
      vt.push(html`<div>${k % 8 === 0 && k < 70 ? html`<b>${k / 8}</b>` : k % 4 === 0 ? html`<i class="hf"></i>` : html`<i class="dt"></i>`}</div>`);
    }
    return html`
      <div class="top">
        <svg class="deco" width="773" height="60" viewBox="0 0 773 60" fill="none" stroke="#234a86" stroke-width="4">
          <path d="M280 15h70M345 35h200l20 18M480 25h40l30 28M690 60l40-33h42M722 40l40-40M735 40l40-40"/><circle cx="299" cy="40" r="17"/><path d="M306 50l-14-15M291 46V34h12" stroke-width="5"/><circle cx="345" cy="35" r="4"/><circle cx="551" cy="17" r="20" stroke-width="5"/><path d="M543 28l16-16M544 10h17v16" stroke-width="6"/><path d="M577-3q12 20 0 40" stroke-width="5"/>
        </svg>
        <div class="tb">${strip(A, [ic(1127, "wsave", 14), ic(1156, "wundo", 15), car(1171), ic(1191, "wredo", 15), ic(1220, "wcust", 14), [1244, 422, html`<fit-text class="tl" w="422">DRAFT_Lab_07_Raster_Operations_06_22_2018.docx - Word (Product Activation...</fit-text>`], ic(1709, "wdisp", 15), ic(1755, "wmin", 14), ic(1801, "wmax", 14), ic(1848, "wcls", 14)])}</div>
        <div class="tabs">${strip(A, [st(1118, 18, "File"), box(1161, 44, "home", html`<fit-text w="33">Home</fit-text>`), st(1212, 29, "Insert"), sep(1247), st(1254, 36, "Design"), sep(1296), st(1303, 36, "Layout"), sep(1345), st(1352, 57, "References"), sep(1415), st(1422, 44, "Mailings"), sep(1473), st(1480, 37, "Review"), sep(1523), st(1530, 25, "View"), sep(1560), st(1567, 62, "EndNote X7"), sep(1634), ic(1650, "bulb", 14), st(1663, 46, "Tell me...", "soft"), st(1722, 59, "Jeremy M..."), box(1792, 63, "share", html`${icon("share", 15)}<fit-text w="29">Share</fit-text>`)])}</div>
      </div>
      <div class="rib">
        <div class="g" style=${styleMap({ width: "74px" })}>
          <div class="clip">
            <div class="paste"><svg class="ic" width="28" height="30" viewBox="0 0 28 30"><path d="M0 3h24v25H0z" fill="#ecc377"/><path d="M5 2.500h4Q9.500 0 12 0t3 2.500h4V7H5z" fill="#777"/><path d="M14.500 11.500h8l5 5v13h-13z" fill="#fff" stroke="#777"/><path d="M22.500 11.500v5h5" fill="none" stroke="#777"/></svg><fit-text w="28">Paste</fit-text><i class="car"></i></div>
            <div class="cc">${icon("wcut", 15)}${icon("wcopy", 15)}${icon("brush", 16)}</div>
          </div>
          ${lab(A, 1102, 50, "Clipboard", 1164)}
        </div>
        <div class="g" style=${styleMap({ width: "195px" })}>
          ${r(1172, [box(1176, 145, "cb", strip(1177, [tx(1180, 82, "Cambria (Body)"), car(1312)])), box(1320, 43, "cb", strip(1321, [tx(1324, 11, "12"), car(1355)]))])}
          ${r(1172, [[1181, 10, html`<span class="b">B</span>`], [1203, 10, html`<span class="i">I</span>`], [1225, 10, html`<span class="b u">U</span>`], car(1247), tx(1257, 16, "abc", "st b x"), [1280, 14, html`<span class="b">x<sub class="sm">2</sub></span>`], [1302, 14, html`<span class="b">x<sup class="sm">2</sup></span>`], sep(1324), ic(1340, "erase")])}
          ${r(1172, [[1179, 15, html`<span class="out">A</span>`], car(1201), [1212, 16, html`<div class="col"><svg class="ic" width="16" height="13" viewBox="0 0 16 13"><path d="M1 8q-1-3 3-2.500V9H2zM6 1v8h3V5.500H6" fill="none" stroke="#555"/><path d="M5 12l2-4 7-7 2 2-6 7z" fill="#777"/></svg><i class="ink" style=${styleMap({ background: "#ff0" })}></i></div>`], car(1236), [1246, 16, html`<div class="col"><span class="ltr">A</span><i class="ink" style=${styleMap({ background: "#f00" })}></i></div>`], car(1270), tx(1280, 15, "Aa", "ltr"), car(1302), sep(1314), [1325, 12, html`<span class="ltr">A</span>`], [1335, 5, html`<svg class="ic" width="5" height="12" viewBox="0 0 5 12"><path d="M0 3l2.500-3L5 3z" fill="#3f76b5"/></svg>`], [1348, 9, html`<span class="ltr">A</span>`], [1357, 5, html`<svg class="ic" width="5" height="12" viewBox="0 0 5 12"><path d="M0 0l2.500 3L5 0z" fill="#3f76b5"/></svg>`]])}
          ${lab(1172, 1249, 24, "Font", 1359)}
        </div>
        <div class="g" style=${styleMap({ width: "164px" })}>
          ${r(1367, [ic(1383, "bul", 14), car(1399), ic(1417, "num", 14), car(1433), ic(1452, "multi", 15), car(1465), sep(1477), ic(1493, "outd"), ic(1515, "ind")])}
          ${r(1367, [box(1372, 22, "pr", icon("al", 15)), ic(1405, "ac", 15), ic(1427, "ar", 15), ic(1449, "aj", 15), sep(1465), ic(1480, "spc", 14), car(1494)])}
          ${r(1367, [ic(1383, "shade"), car(1399), ic(1417, "bord", 14), car(1433), sep(1444), ic(1460, "az", 15), sep(1475), ic(1491, "para", 13)])}
          ${lab(1367, 1414, 53, "Paragraph", 1523)}
        </div>
        <div class="g" style=${styleMap({ width: "246px" })}>
          <div class="gal">
            <div class="gi"><fit-text class="s" w="57">AaBbCcDd</fit-text><fit-text class="nm" w="53">¶ Abstract</fit-text></div>
            <div class="gi"><fit-text class="s l" w="58">AaBbCcI</fit-text><fit-text class="nm" w="46">¶ Author</fit-text></div>
            <div class="gi"><fit-text class="s l" w="58">AaBbCcI</fit-text><fit-text class="nm" w="59">¶ Bibliogr...</fit-text></div>
            <div class="gs"><div><i class="car upc"></i></div><div><i class="car"></i></div><div>${icon("chev", 9)}</div></div>
          </div>
          ${lab(1531, 1631, 29, "Styles", 1768)}
        </div>
        <div class="g" style=${styleMap({ width: "44px" })}><div class="ed"><div class="edb">${icon("wmag", 14)}</div><fit-text w="36">Editing</fit-text><i class="car"></i></div></div>
        <div class="g end"><div class="lab">${strip(1821, [ic(1857, "up", 16)])}</div></div>
      </div>
      <div class="ruler"><div class="tabk"><i></i></div>
        <div class="hr">${hticks.map(t => html`<span>${t.k === "·" ? html`<i class="dt"></i>` : t.k === "|" ? html`<i class="hf"></i>` : t.k === "" ? html`<svg class="mk" width="10" height="22" viewBox="0 0 10 22"><path d="M1 1h8v3L5 9l4 5v2H1v-2l4-5L1 4zM1 16h8v5H1z" fill="#fff" stroke="#777"/></svg>` : t.x === 52 ? "" : t.k}${t.x === 52 ? html`<svg class="mk" width="10" height="8" viewBox="0 0 10 8"><path d="M1 7.500V4l4-4 4 4v3.500z" fill="#fff" stroke="#777"/></svg>` : ""}</span>`)}</div>
      </div>
      <div class="main">
        <div class="vr">${vt}</div>
        <div class="page">
          <div class="shot"><div class="panel">
            <div class="lb"><fit-text w="49">Input Rasters</fit-text><span class="scr">${icon("up", 10)}</span></div>
            <div class="f" style=${styleMap({ justifyContent: "flex-end", paddingRight: "3px" })}><i class="car"></i></div>${btn(icon("open", 11))}
            <div class="lb" style=${styleMap({ height: "8px" })}></div>
            <div class="ls"><div>${icon("dia", 12)}<fit-text w="54">grdn41w076_1</fit-text></div><div>${icon("dia", 12)}<fit-text w="54">grdn40w076_1</fit-text></div></div>
            <div class="bs">${btn(sy("M6 1v10M1 6h10"))}${btn(sy("M3 2.500l6 7M9 2.500l-6 7"))}${btn(sy("M6 11V2M2.500 5.500L6 2l3.500 3.500"))}${btn(sy("M6 1v9M2.500 6.500L6 10l3.500-3.500"))}</div>
            <div class="lb" style=${styleMap({ height: "14px" })}><fit-text w="57">Output Location</fit-text></div>
            <div class="f"><fit-text w="269">C:\\AAAA_01_12_2017\\Academic\\Teaching\\2018_Fall_GUS_3062\\Labs\\Lab7</fit-text></div>${btn(icon("open", 11), "on")}
            <div class="lb" style=${styleMap({ height: "14px" })}><fit-text w="130">Raster Dataset Name with Extension</fit-text></div>
            <div class="f w"><fit-text w="30">elev_mo</fit-text></div>
            <div class="lb" style=${styleMap({ height: "13px" })}><fit-text w="137">Spatial Reference for Raster (optional)</fit-text></div>
            <div class="f"></div>${btn(icon("prj", 12))}
            <div class="lb" style=${styleMap({ height: "14px" })}><fit-text w="73">Pixel Type (optional)</fit-text></div>
            <div class="f w"><fit-text w="63">8_BIT_UNSIGNED</fit-text>${v}</div>
            <div class="lb" style=${styleMap({ height: "11.500px" })}><fit-text w="62">Cellsize (optional)</fit-text></div>
            <div class="f w"></div>
            <div class="lb" style=${styleMap({ height: "12px" })}><i class="grn"></i><fit-text w="61">Number of Bands</fit-text></div>
            <div class="f w act r1">1</div>
            <div class="lb" style=${styleMap({ height: "11.500px" })}><fit-text w="94">Mosaic Operator (optional)</fit-text></div>
            <div class="f w"><fit-text w="18">LAST</fit-text>${v}</div>
            <div class="lb" style=${styleMap({ height: "11.500px" })}><fit-text w="117">Mosaic Colormap Mode (optional)</fit-text></div>
            <div class="f w"><fit-text w="22">FIRST</fit-text>${v}</div>
          </div></div>
          ${li("3.", html`<fit-text w="591">View the new grid.  It should appear as the two original grids merged together.</fit-text>`)}
          ${li("4.", html`<fit-text w="305">Remove the two original elevation grids.</fit-text>`)}
          <div class="h"><fit-text w="411">Mask the Raster Data to Delaware County</fit-text></div>
          <div class="p"><fit-text w="457">Here, we will extract the elevation data for Delaware County.</fit-text></div>
          ${li("1.", html`<fit-text w="530">Add the municipalities layer to ArcMap with the elevation mosaic grid.</fit-text>`)}
          ${li("2.", html`<fit-text w="656">Open <span class="sq">ArcCatalog</span> and explore each of the downloaded data sets, including the maps and</fit-text><fit-text w="49">tables.</fit-text>`)}
          ${li("3.", html`<fit-text w="643">Use a Select by Attribute operation to select Delaware County from the municipalities</fit-text><fit-text w="556">data.  In the attribute table, the County field value=23 is Delaware County.</fit-text>`)}
          ${li("4.", html`<fit-text w="602">Export the Delaware County municipalities to its own <span class="sq">shapefile</span> named <span class="sq">Del_cnty</span>.</fit-text>`)}
          ${li("5.", html`<fit-text w="413">Remove the original municipalities layer from ArcMap.</fit-text>`)}
          <div class="cur"></div>
          <div class="act2"><fit-text class="a" w="157">Activate Windows</fit-text><fit-text w="236">Go to Settings to activate Windows.</fit-text></div>
        </div>
      </div>
      <div class="stat">${strip(A, [tx(1105, 63, "Page 7 of 23"), tx(1187, 59, "4074 words"), ic(1273, "proof", 15), ic(1586, "read", 14), box(1606, 38, "on2", icon("lay", 14)), ic(1663, "web", 15), [1686, 8, html`<span class="pm">−</span>`], [1697, 50, html`<i class="line"></i>`], [1747, 4, html`<i class="knob"></i>`], [1751, 46, html`<i class="line"></i>`], [1800, 10, html`<span class="pm">+</span>`], tx(1824, 27, "110%")])}</div>`;
  }
}

/* ------------------------------------------------------------------ taskbar */

@customElement("task-bar")
export class TaskBar extends LitElement {
  static styles = [shared, css`
    :host { display: flex; width: 1920px; height: 40px; background: linear-gradient(90deg, #000, #060001 55%, #140004 75%, #0a0002); font: 12px "Open Sans", sans-serif; color: #fff; }
    .app { height: 40px; flex-direction: column; border-bottom: 2px solid #76b9ed; }
    .app.on { background: #363636; }
    .time { flex-direction: column; line-height: 17px; padding-top: 0; }
    .nt { display: grid; }
    .nt > * { grid-area: 1 / 1; }
    .bdg { width: 14px; height: 14px; margin: 11px 0 0 8px; border-radius: 50%; background: #333; border: 1px solid #999; font-size: 9px; line-height: 12px; text-align: center; }
    .end { width: 1px; height: 40px; background: #6b6b6b; }
  `];
  render() {
    const app = (cx: number, name: string, on = false) => box(cx - (on ? 24 : 20), on ? 48 : 40, on ? "app on" : "app", icon(name, 22));
    return html`${strip(0, [ic(24, "start"), ic(72, "tview", 20), ic(123, "edge", 20), app(171, "fold"), ic(220, "store", 22), app(270, "chrome"), app(319, "word", true), app(368, "cyl"), app(417, "arc"),
      ic(1599, "shx"), ic(1623, "tri"), ic(1648, "usb"), ic(1672, "globe", 14), ic(1695, "cloud"), ic(1719, "def"), ic(1743, "yel"), ic(1767, "net"), ic(1790, "vol"),
      box(1808, 54, "time", html`<fit-text w="42">2:44 PM</fit-text><fit-text w="52">6/22/2018</fit-text>`),
      [1878, 24, html`<div class="nt">${icon("note")}<span class="bdg">1</span></div>`], [1916, 1, html`<i class="end"></i>`]])}`;
  }
}

/* ------------------------------------------------------------------ desktop */

@customElement("app-root")
export class AppRoot extends LitElement {
  static styles = css`
    :host { display: block; position: relative; width: 1920px; height: 1200px; overflow: hidden; background: #000; }
    .wall { position: absolute; left: 0; top: 0; display: block; }
    .arc { position: absolute; left: 8px; top: 0; box-shadow: 0 0 5px #000; }
    .back { position: absolute; left: 6px; top: 0; width: 1080px; height: 1155px; background: #d0d0d0; border: 1px solid #555; }
    .word { position: absolute; left: 1097px; top: 0; box-shadow: 0 0 6px rgba(0,0,0,.6); }
    .task { position: absolute; left: 0; top: 1160px; }
    .brand { font: 38px "Liberation Serif", serif; fill: #fff; }
    .sub { font: 13px "Open Sans", sans-serif; fill: #fff; letter-spacing: 6px; }
    .arts { font: 600 14px "Open Sans", sans-serif; fill: #fff; }
    .two { font: 12px "Open Sans", sans-serif; fill: #ccd; }
  `;
  render() {
    return html`
      <svg class="wall" width="1920" height="1200" viewBox="0 0 1920 1200">
        <path d="M1090 0h830v1160H1090z" fill="#5c0008"/>
        <path d="M1860 24l42-1-19 72-23 6z" fill="#97082a"/>
        <path d="M1860 141l60-19v75l-48 36h-12z" fill="#ea1230"/>
        <path d="M1860 241l60-44v23l-60 34z" fill="#a60c1e"/>
        <path d="M1860 237l60-24v58l-60 14z" fill="#73000f"/>
        <path d="M1860 286l60-15v185h-60z" fill="#4a0000"/>
        <path d="M1860 310l12 5 24 82-36 3z" fill="#330000"/>
        <path d="M1860 459l60-9v60h-60z" fill="#5f000c"/>
        <path d="M1860 510h60v58h-60z" fill="#3c0000"/>
        <path d="M1860 568h60v38l-60-2z" fill="#980828"/>
        <path d="M1860 604l60 3v100l-40 60h-20z" fill="#4e0003"/>
        <path d="M1872 649l24 3-18 5z" fill="#2a0000"/>
        <path d="M1920 707l-30 42 30 8z" fill="#98082a"/>
        <path d="M1860 745l30 4 30 8v66h-60z" fill="#6a0018"/>
        <path d="M1914 750l6 2v58l-29-7z" fill="#ea1230"/>
        <path d="M1090 822h830v114H1090z" fill="#000"/>
        <path d="M1860 936h60v90h-60z" fill="#90072a"/>
        <path d="M1920 953l-29 20 29 24z" fill="#ea1230"/>
        <path d="M1860 1010l60 24v150h-60z" fill="#8f0820"/>
        <path d="M1860 1010l60 24v52l-60-42z" fill="#4a0004"/>
        <path d="M1160 1150h760v10h-760z" fill="#8f0820"/>
        <path d="M1090 1150h75v10h-75zM1218 1150h170v10h-170zM1440 1150h130v10h-130z" fill="#4a0007"/>
        <text class="brand" x="1868" y="870">PLE</text>
        <text class="sub" x="1879" y="890">SIT</text>
        <text class="arts" x="1873" y="920">rts</text>
        <text class="two" x="1" y="175">2</text>
        <text class="two" x="1" y="280">2</text>
      </svg>
      <div class="back"></div>
      <arc-window class="arc"></arc-window>
      <word-window class="word"></word-window>
      <task-bar class="task"></task-bar>`;
  }
}
